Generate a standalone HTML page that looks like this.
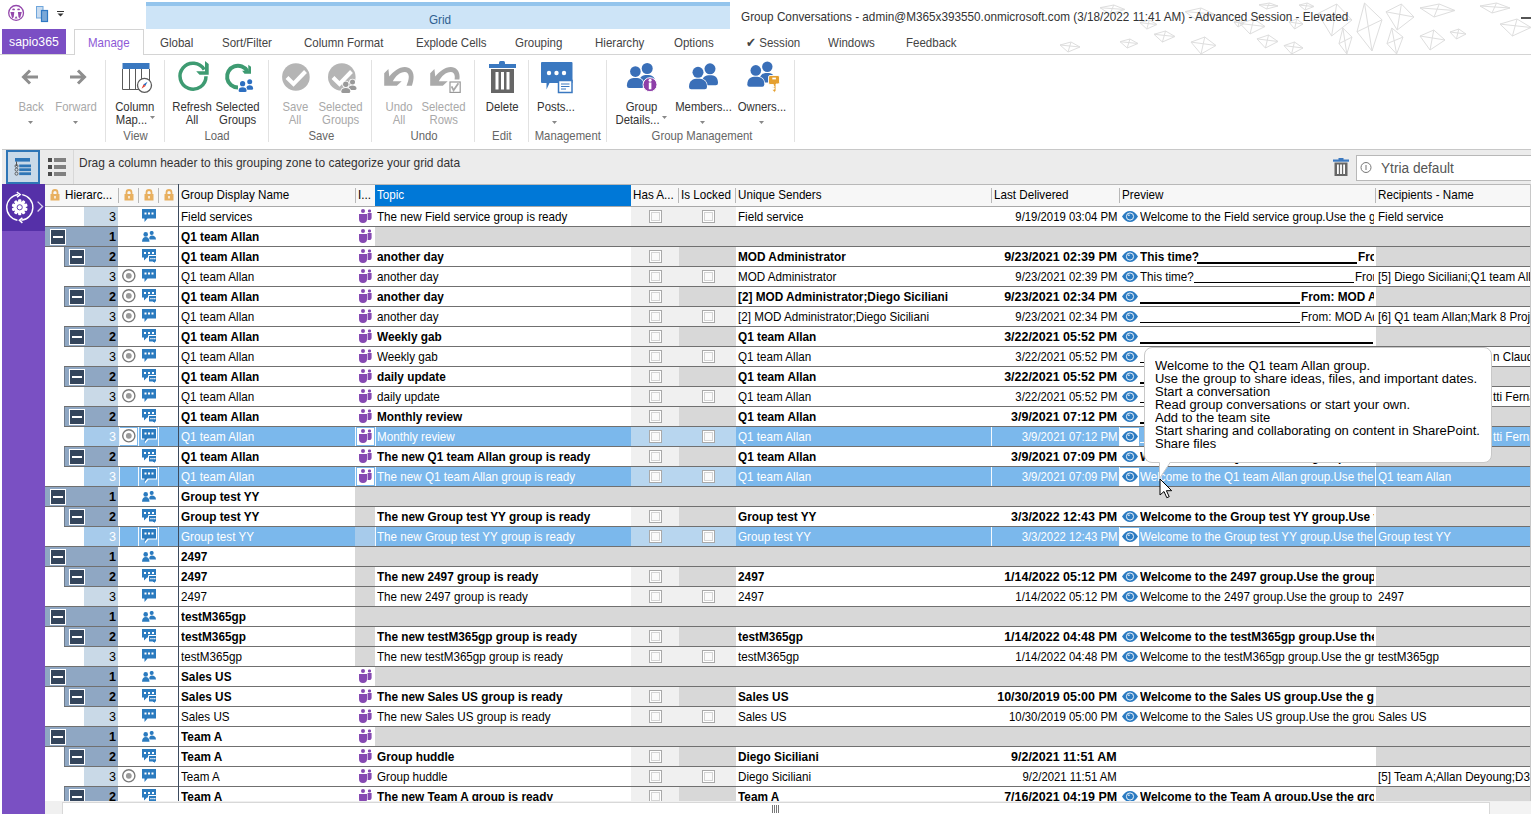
<!DOCTYPE html>
<html><head><meta charset="utf-8"><style>
*{margin:0;padding:0;box-sizing:border-box}
html,body{width:1531px;height:814px;overflow:hidden;background:#fff;font-family:"Liberation Sans",sans-serif;color:#000}
.a{position:absolute}
.tx{position:absolute;white-space:nowrap}
.tx span{white-space:nowrap}
.mbox{position:absolute;width:16px;height:16px;background:#34455c;border:1px solid #fff}
.mbox i{position:absolute;left:2px;top:6px;width:10px;height:2px;background:#fff}
.cb{position:absolute;width:13px;height:13px;border:1px solid #a9a9a9;background:#fafafa;box-shadow:inset 0 0 0 1px #fff,inset 0 0 0 2px #d4d4d4}
.sep{position:absolute;top:60px;width:1px;height:82px;background:#e2e2e2}
.hs{position:absolute;top:188px;width:1px;height:15px;background:#b8b8b8}
</style></head><body>
<!-- title bar -->
<svg class="a" style="left:0;top:0" width="1531" height="54" viewBox="0 0 1531 54"><g fill="none" stroke="#dedede" stroke-width="1"><path d="M1185.0 11.6L1201.0 8.0L1214.0 14.0L1196.6 20.0zM1185 11.6L1214 14.0M1200.95 8L1196.6 20"/><path d="M1140.0 22.7L1149.3 20.0L1157.0 24.5L1146.8 29.0zM1140 22.7L1157 24.5M1149.35 20L1146.8 29"/><path d="M1154.0 34.3L1165.5 31.0L1175.0 36.5L1162.4 42.0zM1154 34.3L1175 36.5M1165.55 31L1162.4 42"/><path d="M1120.0 41.7L1129.9 39.0L1138.0 43.5L1127.2 48.0zM1120 41.7L1138 43.5M1129.9 39L1127.2 48"/><path d="M1191.0 42.1L1204.8 37.0L1216.0 45.5L1201.0 54.0zM1191 42.1L1216 45.5M1204.75 37L1201.0 54"/><path d="M1234.0 22.1L1239.5 20.0L1244.0 23.5L1238.0 27.0zM1234 22.1L1244 23.5M1239.5 20L1238.0 27"/><path d="M1259.0 4.8L1269.5 3.0L1278.0 6.0L1266.6 9.0zM1259 4.8L1278 6.0M1269.45 3L1266.6 9"/><path d="M1299.0 5.1L1307.2 3.0L1314.0 6.5L1305.0 10.0zM1299 5.1L1314 6.5M1307.25 3L1305.0 10"/><path d="M1240.0 23.5L1253.8 19.0L1265.0 26.5L1250.0 34.0zM1240 23.5L1265 26.5M1253.75 19L1250.0 34"/><path d="M1289.0 22.0L1296.7 19.0L1303.0 24.0L1294.6 29.0zM1289 22.0L1303 24.0M1296.7 19L1294.6 29"/><path d="M1318.0 13.6L1336.7 4.0L1352.0 20.0L1331.6 36.0zM1318 13.6L1352 20.0M1336.7 4L1331.6 36"/><path d="M1257.0 38.9L1268.5 35.0L1278.0 41.5L1265.4 48.0zM1257 38.9L1278 41.5M1268.55 35L1265.4 48"/><path d="M1284.0 45.6L1294.5 42.0L1303.0 48.0L1291.6 54.0zM1284 45.6L1303 48.0M1294.45 42L1291.6 54"/><path d="M1342.9 28.0L1352.0 37.1L1346.8 54.0L1339.0 43.6zM1342.9 28L1346.8 54M1339 43.6L1352 37.1"/><path d="M1364.5 3.0L1382.0 19.8L1372.0 51.0L1357.0 31.8zM1364.5 3L1372.0 51M1357 31.799999999999997L1382 19.799999999999997"/><path d="M1386.0 11.8L1401.4 4.0L1414.0 17.0L1397.2 30.0zM1386 11.8L1414 17.0M1401.4 4L1397.2 30"/><path d="M1391.8 28.0L1403.0 37.1L1396.6 54.0L1387.0 43.6zM1391.8 28L1396.6 54M1387 43.6L1403 37.1"/><path d="M1420.0 7.9L1439.2 4.0L1455.0 10.5L1434.0 17.0zM1420 7.9L1455 10.5M1439.25 4L1434.0 17"/><path d="M1420.0 36.0L1433.8 30.0L1445.0 40.0L1430.0 50.0zM1420 36.0L1445 40.0M1433.75 30L1430.0 50"/><path d="M1450.0 32.0L1458.8 29.0L1466.0 34.0L1456.4 39.0zM1450 32.0L1466 34.0M1458.8 29L1456.4 39"/><path d="M1480.0 6.0L1496.5 3.0L1510.0 8.0L1492.0 13.0zM1480 6.0L1510 8.0M1496.5 3L1492.0 13"/><path d="M1500.0 24.1L1517.0 19.0L1531.0 27.5L1512.4 36.0zM1500 24.1L1531 27.5M1517.05 19L1512.4 36"/><path d="M1100.0 7.7L1113.8 5.0L1125.0 9.5L1110.0 14.0zM1100 7.699999999999999L1125 9.5M1113.75 5L1110.0 14"/><path d="M1060.0 45.0L1071.0 42.0L1080.0 47.0L1068.0 52.0zM1060 45.0L1080 47.0M1071.0 42L1068.0 52"/></g></svg>
<div class="a" style="left:146px;top:2px;width:584px;height:27px;background:#cde4f7;border-top:4px solid #93c4ec"></div>
<div class="tx" style="left:429px;top:10px;width:1000px;height:20px;line-height:20px;font-size:12.6px;color:#2f5f90;"><span style="position:absolute;left:0;top:0;transform-origin:0 0;transform:scaleX(0.93)">Grid</span></div>
<div class="tx" style="left:741px;top:7px;width:1000px;height:20px;line-height:20px;font-size:12.6px;color:#333;"><span style="position:absolute;left:0;top:0;transform-origin:0 0;transform:scaleX(0.932)">Group Conversations - admin@M365x393550.onmicrosoft.com (3/18/2022 11:41 AM) - Advanced Session - Elevated</span></div>
<!-- tabs -->
<div class="a" style="left:0;top:54px;width:1531px;height:1px;background:#d4d4d4"></div>
<div class="a" style="left:2px;top:29px;width:64px;height:25px;background:#7b4fc4"></div>
<div class="tx" style="left:9px;top:29px;width:1000px;height:25px;line-height:25px;font-size:13.2px;color:#fff;"><span style="position:absolute;left:0;top:0;transform-origin:0 0;transform:scaleX(0.93)">sapio365</span></div>
<div class="a" style="left:74px;top:29px;width:70px;height:26px;background:#fff;border:1px solid #d4d4d4;border-bottom:none"></div>
<div class="tx" style="left:88px;top:30px;width:1000px;height:26px;line-height:26px;font-size:12.6px;color:#8e59d6;"><span style="position:absolute;left:0;top:0;transform-origin:0 0;transform:scaleX(0.915)">Manage</span></div>
<div class="tx" style="left:160px;top:30px;width:1000px;height:26px;line-height:26px;font-size:12.6px;color:#444;"><span style="position:absolute;left:0;top:0;transform-origin:0 0;transform:scaleX(0.915)">Global</span></div>
<div class="tx" style="left:222px;top:30px;width:1000px;height:26px;line-height:26px;font-size:12.6px;color:#444;"><span style="position:absolute;left:0;top:0;transform-origin:0 0;transform:scaleX(0.915)">Sort/Filter</span></div>
<div class="tx" style="left:304px;top:30px;width:1000px;height:26px;line-height:26px;font-size:12.6px;color:#444;"><span style="position:absolute;left:0;top:0;transform-origin:0 0;transform:scaleX(0.915)">Column Format</span></div>
<div class="tx" style="left:416px;top:30px;width:1000px;height:26px;line-height:26px;font-size:12.6px;color:#444;"><span style="position:absolute;left:0;top:0;transform-origin:0 0;transform:scaleX(0.915)">Explode Cells</span></div>
<div class="tx" style="left:515px;top:30px;width:1000px;height:26px;line-height:26px;font-size:12.6px;color:#444;"><span style="position:absolute;left:0;top:0;transform-origin:0 0;transform:scaleX(0.915)">Grouping</span></div>
<div class="tx" style="left:595px;top:30px;width:1000px;height:26px;line-height:26px;font-size:12.6px;color:#444;"><span style="position:absolute;left:0;top:0;transform-origin:0 0;transform:scaleX(0.915)">Hierarchy</span></div>
<div class="tx" style="left:674px;top:30px;width:1000px;height:26px;line-height:26px;font-size:12.6px;color:#444;"><span style="position:absolute;left:0;top:0;transform-origin:0 0;transform:scaleX(0.915)">Options</span></div>
<div class="tx" style="left:746px;top:30px;width:1000px;height:26px;line-height:26px;font-size:12.6px;color:#444;"><span style="position:absolute;left:0;top:0;transform-origin:0 0;transform:scaleX(0.915)">&#10004; Session</span></div>
<div class="tx" style="left:828px;top:30px;width:1000px;height:26px;line-height:26px;font-size:12.6px;color:#444;"><span style="position:absolute;left:0;top:0;transform-origin:0 0;transform:scaleX(0.915)">Windows</span></div>
<div class="tx" style="left:906px;top:30px;width:1000px;height:26px;line-height:26px;font-size:12.6px;color:#444;"><span style="position:absolute;left:0;top:0;transform-origin:0 0;transform:scaleX(0.915)">Feedback</span></div>
<!-- ribbon -->
<div class="sep" style="left:105px"></div>
<div class="sep" style="left:164px"></div>
<div class="sep" style="left:268px"></div>
<div class="sep" style="left:371px"></div>
<div class="sep" style="left:474px"></div>
<div class="sep" style="left:528px"></div>
<div class="sep" style="left:606px"></div>
<div class="sep" style="left:794px"></div>
<div class="tx" style="left:-29px;top:101px;width:120px;height:13px;line-height:13px;font-size:12.6px;color:#a9a9a9;text-align:center"><span style="display:inline-block;transform:scaleX(0.9)">Back</span></div><div class="tx" style="left:16px;top:101px;width:120px;height:13px;line-height:13px;font-size:12.6px;color:#a9a9a9;text-align:center"><span style="display:inline-block;transform:scaleX(0.9)">Forward</span></div><div class="tx" style="left:75px;top:101px;width:120px;height:13px;line-height:13px;font-size:12.6px;color:#333;text-align:center"><span style="display:inline-block;transform:scaleX(0.9)">Column</span></div><div class="tx" style="left:71px;top:114px;width:120px;height:13px;line-height:13px;font-size:12.6px;color:#333;text-align:center"><span style="display:inline-block;transform:scaleX(0.9)">Map...</span></div><div class="tx" style="left:132px;top:101px;width:120px;height:13px;line-height:13px;font-size:12.6px;color:#333;text-align:center"><span style="display:inline-block;transform:scaleX(0.9)">Refresh</span></div><div class="tx" style="left:132px;top:114px;width:120px;height:13px;line-height:13px;font-size:12.6px;color:#333;text-align:center"><span style="display:inline-block;transform:scaleX(0.9)">All</span></div><div class="tx" style="left:178px;top:101px;width:120px;height:13px;line-height:13px;font-size:12.6px;color:#333;text-align:center"><span style="display:inline-block;transform:scaleX(0.9)">Selected</span></div><div class="tx" style="left:178px;top:114px;width:120px;height:13px;line-height:13px;font-size:12.6px;color:#333;text-align:center"><span style="display:inline-block;transform:scaleX(0.9)">Groups</span></div><div class="tx" style="left:235px;top:101px;width:120px;height:13px;line-height:13px;font-size:12.6px;color:#a9a9a9;text-align:center"><span style="display:inline-block;transform:scaleX(0.9)">Save</span></div><div class="tx" style="left:235px;top:114px;width:120px;height:13px;line-height:13px;font-size:12.6px;color:#a9a9a9;text-align:center"><span style="display:inline-block;transform:scaleX(0.9)">All</span></div><div class="tx" style="left:281px;top:101px;width:120px;height:13px;line-height:13px;font-size:12.6px;color:#a9a9a9;text-align:center"><span style="display:inline-block;transform:scaleX(0.9)">Selected</span></div><div class="tx" style="left:281px;top:114px;width:120px;height:13px;line-height:13px;font-size:12.6px;color:#a9a9a9;text-align:center"><span style="display:inline-block;transform:scaleX(0.9)">Groups</span></div><div class="tx" style="left:339px;top:101px;width:120px;height:13px;line-height:13px;font-size:12.6px;color:#a9a9a9;text-align:center"><span style="display:inline-block;transform:scaleX(0.9)">Undo</span></div><div class="tx" style="left:339px;top:114px;width:120px;height:13px;line-height:13px;font-size:12.6px;color:#a9a9a9;text-align:center"><span style="display:inline-block;transform:scaleX(0.9)">All</span></div><div class="tx" style="left:384px;top:101px;width:120px;height:13px;line-height:13px;font-size:12.6px;color:#a9a9a9;text-align:center"><span style="display:inline-block;transform:scaleX(0.9)">Selected</span></div><div class="tx" style="left:384px;top:114px;width:120px;height:13px;line-height:13px;font-size:12.6px;color:#a9a9a9;text-align:center"><span style="display:inline-block;transform:scaleX(0.9)">Rows</span></div><div class="tx" style="left:442px;top:101px;width:120px;height:13px;line-height:13px;font-size:12.6px;color:#333;text-align:center"><span style="display:inline-block;transform:scaleX(0.9)">Delete</span></div><div class="tx" style="left:496px;top:101px;width:120px;height:13px;line-height:13px;font-size:12.6px;color:#333;text-align:center"><span style="display:inline-block;transform:scaleX(0.9)">Posts...</span></div><div class="tx" style="left:582px;top:101px;width:120px;height:13px;line-height:13px;font-size:12.6px;color:#333;text-align:center"><span style="display:inline-block;transform:scaleX(0.9)">Group</span></div><div class="tx" style="left:577px;top:114px;width:120px;height:13px;line-height:13px;font-size:12.6px;color:#333;text-align:center"><span style="display:inline-block;transform:scaleX(0.9)">Details...</span></div><div class="tx" style="left:643px;top:101px;width:120px;height:13px;line-height:13px;font-size:12.6px;color:#333;text-align:center"><span style="display:inline-block;transform:scaleX(0.9)">Members...</span></div><div class="tx" style="left:702px;top:101px;width:120px;height:13px;line-height:13px;font-size:12.6px;color:#333;text-align:center"><span style="display:inline-block;transform:scaleX(0.9)">Owners...</span></div>
<div class="tx" style="left:56px;top:129px;width:160px;height:14px;line-height:14px;font-size:12.6px;color:#666;text-align:center"><span style="display:inline-block;transform:scaleX(0.9)">View</span></div><div class="tx" style="left:137px;top:129px;width:160px;height:14px;line-height:14px;font-size:12.6px;color:#666;text-align:center"><span style="display:inline-block;transform:scaleX(0.9)">Load</span></div><div class="tx" style="left:241px;top:129px;width:160px;height:14px;line-height:14px;font-size:12.6px;color:#666;text-align:center"><span style="display:inline-block;transform:scaleX(0.9)">Save</span></div><div class="tx" style="left:344px;top:129px;width:160px;height:14px;line-height:14px;font-size:12.6px;color:#666;text-align:center"><span style="display:inline-block;transform:scaleX(0.9)">Undo</span></div><div class="tx" style="left:422px;top:129px;width:160px;height:14px;line-height:14px;font-size:12.6px;color:#666;text-align:center"><span style="display:inline-block;transform:scaleX(0.9)">Edit</span></div><div class="tx" style="left:488px;top:129px;width:160px;height:14px;line-height:14px;font-size:12.6px;color:#666;text-align:center"><span style="display:inline-block;transform:scaleX(0.9)">Management</span></div><div class="tx" style="left:622px;top:129px;width:160px;height:14px;line-height:14px;font-size:12.6px;color:#666;text-align:center"><span style="display:inline-block;transform:scaleX(0.9)">Group Management</span></div>
<!-- grouping zone -->
<div class="a" style="left:2px;top:149px;width:1529px;height:35px;background:#ececec;border-top:1px solid #c8c8c8"></div>
<div class="a" style="left:6px;top:150px;width:34px;height:34px;background:#c9d9e8;border:2px solid #2e75b6"></div>
<div class="a" style="left:40px;top:150px;width:34px;height:34px;background:#ebebeb;border-right:1px solid #d8d8d8"></div>
<div class="tx" style="left:79px;top:153px;width:1000px;height:20px;line-height:20px;font-size:12.6px;color:#333;"><span style="position:absolute;left:0;top:0;transform-origin:0 0;transform:scaleX(0.95)">Drag a column header to this grouping zone to categorize your grid data</span></div>
<div class="a" style="left:1356px;top:155px;width:176px;height:26px;background:#fff;border:1px solid #b8b8b8"></div>
<div class="tx" style="left:1381px;top:158px;width:1000px;height:22px;line-height:22px;font-size:13.8px;color:#555;"><span style="position:absolute;left:0;top:0;transform-origin:0 0;transform:scaleX(0.99)">Ytria default</span></div>
<!-- sidebar -->
<div class="a" style="left:2px;top:184px;width:43px;height:630px;background:#7a50c3"></div>
<div class="a" style="left:2px;top:184px;width:43px;height:47px;background:#5530a8"></div>
<!-- grid header -->
<div class="a" style="left:45px;top:184px;width:1486px;height:23px;background:#f7f7f7;border-top:1px solid #b8b8b8;border-bottom:1px solid #a8a8a8"></div>
<div class="a" style="left:375px;top:185px;width:256px;height:21px;background:#0078d7"></div>
<div class="hs" style="left:118px"></div><div class="hs" style="left:138px"></div><div class="hs" style="left:158px"></div>
<div class="hs" style="left:355px"></div><div class="hs" style="left:678px"></div><div class="hs" style="left:735px"></div>
<div class="hs" style="left:991px"></div><div class="hs" style="left:1119px"></div><div class="hs" style="left:1375px"></div>
<div class="tx" style="left:65px;top:185px;width:1000px;height:20px;line-height:20px;font-size:12.6px;"><span style="position:absolute;left:0;top:0;transform-origin:0 0;transform:scaleX(0.925)">Hierarc...</span></div>
<div class="tx" style="left:181px;top:185px;width:1000px;height:20px;line-height:20px;font-size:12.6px;"><span style="position:absolute;left:0;top:0;transform-origin:0 0;transform:scaleX(0.925)">Group Display Name</span></div>
<div class="tx" style="left:358px;top:185px;width:1000px;height:20px;line-height:20px;font-size:12.6px;"><span style="position:absolute;left:0;top:0;transform-origin:0 0;transform:scaleX(0.925)">I...</span></div>
<div class="tx" style="left:633px;top:185px;width:1000px;height:20px;line-height:20px;font-size:12.6px;"><span style="position:absolute;left:0;top:0;transform-origin:0 0;transform:scaleX(0.925)">Has A...</span></div>
<div class="tx" style="left:681px;top:185px;width:1000px;height:20px;line-height:20px;font-size:12.6px;"><span style="position:absolute;left:0;top:0;transform-origin:0 0;transform:scaleX(0.925)">Is Locked</span></div>
<div class="tx" style="left:738px;top:185px;width:1000px;height:20px;line-height:20px;font-size:12.6px;"><span style="position:absolute;left:0;top:0;transform-origin:0 0;transform:scaleX(0.925)">Unique Senders</span></div>
<div class="tx" style="left:994px;top:185px;width:1000px;height:20px;line-height:20px;font-size:12.6px;"><span style="position:absolute;left:0;top:0;transform-origin:0 0;transform:scaleX(0.925)">Last Delivered</span></div>
<div class="tx" style="left:1122px;top:185px;width:1000px;height:20px;line-height:20px;font-size:12.6px;"><span style="position:absolute;left:0;top:0;transform-origin:0 0;transform:scaleX(0.925)">Preview</span></div>
<div class="tx" style="left:1378px;top:185px;width:1000px;height:20px;line-height:20px;font-size:12.6px;"><span style="position:absolute;left:0;top:0;transform-origin:0 0;transform:scaleX(0.925)">Recipients - Name</span></div><div class="tx" style="left:377px;top:185px;width:1000px;height:20px;line-height:20px;font-size:12.6px;color:#fff;"><span style="position:absolute;left:0;top:0;transform-origin:0 0;transform:scaleX(0.925)">Topic</span></div>
<!-- grid body -->
<div class="a" style="left:45px;top:207px;width:1485px;height:594px;background:#fff"></div>
<div class="a" style="left:84px;top:207px;width:34px;height:19px;background:#c9d9e7;"></div>
<div class="tx" style="left:-284px;top:207px;width:400px;height:20px;line-height:20px;font-size:12.6px;color:#000;"><span style="position:absolute;right:0;top:0;transform-origin:100% 0;transform:scaleX(1)">3</span></div>
<svg width="14" height="14" viewBox="0 0 14 14" style="position:absolute;left:142px;top:209px"><path d="M0 0h14v9.5h-8.5l-3 3.5v-3.5h-2.5z" fill="#2b7bbf"/><rect x="2.5" y="3.5" width="2" height="2" fill="#fff"/><rect x="6" y="3.5" width="2" height="2" fill="#fff"/><rect x="9.5" y="3.5" width="2" height="2" fill="#fff"/></svg>
<div class="tx" style="left:181px;top:207px;width:174px;height:20px;line-height:20px;font-size:12.6px;overflow:hidden;"><span style="position:absolute;left:0;top:0;transform-origin:0 0;transform:scaleX(0.925)">Field services</span></div>
<svg width="13" height="14" viewBox="0 0 13 14" style="position:absolute;left:359px;top:209px"><circle cx="4" cy="2" r="2" fill="#8649b2"/><rect x="9" y="0.4" width="3" height="3" rx="1.2" fill="#8649b2"/><path d="M8.6 4.1h4v4.3a2.6 2.6 0 0 1-2.6 2.6h-1.4z" fill="#8649b2"/><path d="M0 5h8v5a4 4 0 0 1-8 0z" fill="#8649b2"/></svg>
<div class="tx" style="left:377px;top:207px;width:1000px;height:20px;line-height:20px;font-size:12.6px;"><span style="position:absolute;left:0;top:0;transform-origin:0 0;transform:scaleX(0.925)">The new Field service group is ready</span></div>
<div class="a" style="left:631px;top:207px;width:48px;height:19px;background:#f0f0f0;"></div>
<div class="cb" style="left:649px;top:210px"></div>
<div class="a" style="left:679px;top:207px;width:57px;height:19px;background:#f0f0f0;"></div>
<div class="cb" style="left:702px;top:210px"></div>
<div class="tx" style="left:738px;top:207px;width:253px;height:20px;line-height:20px;font-size:12.6px;overflow:hidden;"><span style="position:absolute;left:0;top:0;transform-origin:0 0;transform:scaleX(0.925)">Field service</span></div>
<div class="tx" style="left:717px;top:207px;width:400px;height:20px;line-height:20px;font-size:12.6px;"><span style="position:absolute;right:0;top:0;transform-origin:100% 0;transform:scaleX(0.9)">9/19/2019 03:04 PM</span></div>
<svg width="16" height="11" viewBox="0 0 16 11" style="position:absolute;left:1122px;top:211px"><path d="M0 5.5C2.5 1.5 5 0 8 0S13.5 1.5 16 5.5C13.5 9.5 11 11 8 11S2.5 9.5 0 5.5z" fill="#2b7bc2"/><circle cx="8" cy="5.5" r="3.6" fill="none" stroke="#fff" stroke-width="0.9"/><circle cx="6.9" cy="4.3" r="0.8" fill="#fff"/></svg>
<div class="tx" style="left:1140px;top:207px;width:234px;height:20px;line-height:20px;font-size:12.6px;overflow:hidden;"><span style="position:absolute;left:0;top:0;transform-origin:0 0;transform:scaleX(0.925)">Welcome to the Field service group.Use the group to share</span></div>
<div class="tx" style="left:1378px;top:207px;width:152px;height:20px;line-height:20px;font-size:12.6px;overflow:hidden;"><span style="position:absolute;left:0;top:0;transform-origin:0 0;transform:scaleX(0.925)">Field service</span></div>
<div class="a" style="left:45px;top:227px;width:73px;height:19px;background:#8fa7c3;"></div>
<div class="mbox" style="left:50px;top:229px"><i></i></div>
<div class="tx" style="left:-284px;top:227px;width:400px;height:20px;line-height:20px;font-size:12.6px;font-weight:bold;"><span style="position:absolute;right:0;top:0;transform-origin:100% 0;transform:scaleX(1)">1</span></div>
<svg width="14" height="12" viewBox="0 0 14 12" style="position:absolute;left:142px;top:231px"><circle cx="9.7" cy="1.9" r="2" fill="#2b7bbf"/><path d="M7 8.4C7 5.8 8.2 4.5 10 4.5S14 5.6 14 8.4z" fill="#2b7bbf"/><path d="M-0.6 11.4C-0.6 7.6 1.2 5.3 3.75 5.3S8.1 7.6 8.1 11.4z" fill="#fff"/><circle cx="3.7" cy="3.4" r="2.9" fill="#fff"/><circle cx="3.7" cy="3.4" r="2.3" fill="#2b7bbf"/><path d="M0 10.8C0 7.8 1.5 6.1 3.75 6.1S7.5 7.8 7.5 10.8z" fill="#2b7bbf"/></svg>
<div class="tx" style="left:181px;top:227px;width:174px;height:20px;line-height:20px;font-size:12.6px;font-weight:bold;overflow:hidden;"><span style="position:absolute;left:0;top:0;transform-origin:0 0;transform:scaleX(0.937)">Q1 team Allan</span></div>
<svg width="13" height="14" viewBox="0 0 13 14" style="position:absolute;left:359px;top:229px"><circle cx="4" cy="2" r="2" fill="#8649b2"/><rect x="9" y="0.4" width="3" height="3" rx="1.2" fill="#8649b2"/><path d="M8.6 4.1h4v4.3a2.6 2.6 0 0 1-2.6 2.6h-1.4z" fill="#8649b2"/><path d="M0 5h8v5a4 4 0 0 1-8 0z" fill="#8649b2"/></svg>
<div class="a" style="left:375px;top:227px;width:1155px;height:19px;background:#d8d8d8;"></div>
<div class="a" style="left:45px;top:226px;width:1485px;height:1px;background:#707070"></div>
<div class="a" style="left:64px;top:247px;width:54px;height:19px;background:#8fa7c3;"></div>
<div class="a" style="left:64px;top:247px;width:1px;height:19px;background:#6f7c8c;"></div>
<div class="mbox" style="left:69px;top:249px"><i></i></div>
<div class="tx" style="left:-284px;top:247px;width:400px;height:20px;line-height:20px;font-size:12.6px;font-weight:bold;"><span style="position:absolute;right:0;top:0;transform-origin:100% 0;transform:scaleX(1)">2</span></div>
<svg width="15" height="16" viewBox="0 0 15 16" style="position:absolute;left:142px;top:249px"><path d="M0 0h14v8.5h-9l-3 3v-3h-2z" fill="#2b7bbf"/><rect x="2" y="3" width="2" height="2" fill="#fff"/><rect x="6" y="3" width="2" height="2" fill="#fff"/><rect x="10" y="3" width="2" height="2" fill="#fff"/><path d="M6.5 6.5h8v6.5h-1.5v2l-2-2h-4.5z" fill="#2b7bbf" stroke="#fff" stroke-width="1"/><rect x="8.3" y="9" width="1.3" height="1.3" fill="#fff"/><rect x="10.3" y="9" width="1.3" height="1.3" fill="#fff"/><rect x="12.2" y="9" width="1.3" height="1.3" fill="#fff"/></svg>
<div class="tx" style="left:181px;top:247px;width:174px;height:20px;line-height:20px;font-size:12.6px;font-weight:bold;overflow:hidden;"><span style="position:absolute;left:0;top:0;transform-origin:0 0;transform:scaleX(0.937)">Q1 team Allan</span></div>
<svg width="13" height="14" viewBox="0 0 13 14" style="position:absolute;left:359px;top:249px"><circle cx="4" cy="2" r="2" fill="#8649b2"/><rect x="9" y="0.4" width="3" height="3" rx="1.2" fill="#8649b2"/><path d="M8.6 4.1h4v4.3a2.6 2.6 0 0 1-2.6 2.6h-1.4z" fill="#8649b2"/><path d="M0 5h8v5a4 4 0 0 1-8 0z" fill="#8649b2"/></svg>
<div class="tx" style="left:377px;top:247px;width:1000px;height:20px;line-height:20px;font-size:12.6px;font-weight:bold;"><span style="position:absolute;left:0;top:0;transform-origin:0 0;transform:scaleX(0.937)">another day</span></div>
<div class="a" style="left:631px;top:247px;width:48px;height:19px;background:#f0f0f0;"></div>
<div class="cb" style="left:649px;top:250px"></div>
<div class="a" style="left:679px;top:247px;width:57px;height:19px;background:#d8d8d8;"></div>
<div class="tx" style="left:738px;top:247px;width:253px;height:20px;line-height:20px;font-size:12.6px;font-weight:bold;overflow:hidden;"><span style="position:absolute;left:0;top:0;transform-origin:0 0;transform:scaleX(0.937)">MOD Administrator</span></div>
<div class="tx" style="left:717px;top:247px;width:400px;height:20px;line-height:20px;font-size:12.6px;font-weight:bold;"><span style="position:absolute;right:0;top:0;transform-origin:100% 0;transform:scaleX(0.99)">9/23/2021 02:39 PM</span></div>
<svg width="16" height="11" viewBox="0 0 16 11" style="position:absolute;left:1122px;top:251px"><path d="M0 5.5C2.5 1.5 5 0 8 0S13.5 1.5 16 5.5C13.5 9.5 11 11 8 11S2.5 9.5 0 5.5z" fill="#2b7bc2"/><circle cx="8" cy="5.5" r="3.6" fill="none" stroke="#fff" stroke-width="0.9"/><circle cx="6.9" cy="4.3" r="0.8" fill="#fff"/></svg>
<div class="tx" style="left:1140px;top:247px;width:234px;height:20px;line-height:20px;font-size:12.6px;font-weight:bold;overflow:hidden;"><span style="position:absolute;left:0;top:0;transform-origin:0 0;transform:scaleX(0.937)">This time?</span></div>
<div class="a" style="left:1197px;top:262px;width:160px;height:2px;background:#000;"></div>
<div class="tx" style="left:1358px;top:247px;width:16px;height:20px;line-height:20px;font-size:12.6px;font-weight:bold;overflow:hidden;"><span style="position:absolute;left:0;top:0;transform-origin:0 0;transform:scaleX(0.937)">From: MOD</span></div>
<div class="a" style="left:1376px;top:247px;width:154px;height:19px;background:#d8d8d8;"></div>
<div class="a" style="left:45px;top:246px;width:1485px;height:1px;background:#707070"></div>
<div class="a" style="left:84px;top:267px;width:34px;height:19px;background:#c9d9e7;"></div>
<div class="tx" style="left:-284px;top:267px;width:400px;height:20px;line-height:20px;font-size:12.6px;color:#000;"><span style="position:absolute;right:0;top:0;transform-origin:100% 0;transform:scaleX(1)">3</span></div>
<svg width="14" height="14" viewBox="0 0 14 14" style="position:absolute;left:122px;top:269px"><circle cx="6.8" cy="6.8" r="6.1" fill="#fff" stroke="#7a7a7a" stroke-width="1.4"/><circle cx="6.8" cy="6.8" r="2.9" fill="#9a9a9a"/></svg>
<svg width="14" height="14" viewBox="0 0 14 14" style="position:absolute;left:142px;top:269px"><path d="M0 0h14v9.5h-8.5l-3 3.5v-3.5h-2.5z" fill="#2b7bbf"/><rect x="2.5" y="3.5" width="2" height="2" fill="#fff"/><rect x="6" y="3.5" width="2" height="2" fill="#fff"/><rect x="9.5" y="3.5" width="2" height="2" fill="#fff"/></svg>
<div class="tx" style="left:181px;top:267px;width:174px;height:20px;line-height:20px;font-size:12.6px;overflow:hidden;"><span style="position:absolute;left:0;top:0;transform-origin:0 0;transform:scaleX(0.925)">Q1 team Allan</span></div>
<svg width="13" height="14" viewBox="0 0 13 14" style="position:absolute;left:359px;top:269px"><circle cx="4" cy="2" r="2" fill="#8649b2"/><rect x="9" y="0.4" width="3" height="3" rx="1.2" fill="#8649b2"/><path d="M8.6 4.1h4v4.3a2.6 2.6 0 0 1-2.6 2.6h-1.4z" fill="#8649b2"/><path d="M0 5h8v5a4 4 0 0 1-8 0z" fill="#8649b2"/></svg>
<div class="tx" style="left:377px;top:267px;width:1000px;height:20px;line-height:20px;font-size:12.6px;"><span style="position:absolute;left:0;top:0;transform-origin:0 0;transform:scaleX(0.925)">another day</span></div>
<div class="a" style="left:631px;top:267px;width:48px;height:19px;background:#f0f0f0;"></div>
<div class="cb" style="left:649px;top:270px"></div>
<div class="a" style="left:679px;top:267px;width:57px;height:19px;background:#f0f0f0;"></div>
<div class="cb" style="left:702px;top:270px"></div>
<div class="tx" style="left:738px;top:267px;width:253px;height:20px;line-height:20px;font-size:12.6px;overflow:hidden;"><span style="position:absolute;left:0;top:0;transform-origin:0 0;transform:scaleX(0.925)">MOD Administrator</span></div>
<div class="tx" style="left:717px;top:267px;width:400px;height:20px;line-height:20px;font-size:12.6px;"><span style="position:absolute;right:0;top:0;transform-origin:100% 0;transform:scaleX(0.9)">9/23/2021 02:39 PM</span></div>
<svg width="16" height="11" viewBox="0 0 16 11" style="position:absolute;left:1122px;top:271px"><path d="M0 5.5C2.5 1.5 5 0 8 0S13.5 1.5 16 5.5C13.5 9.5 11 11 8 11S2.5 9.5 0 5.5z" fill="#2b7bc2"/><circle cx="8" cy="5.5" r="3.6" fill="none" stroke="#fff" stroke-width="0.9"/><circle cx="6.9" cy="4.3" r="0.8" fill="#fff"/></svg>
<div class="tx" style="left:1140px;top:267px;width:234px;height:20px;line-height:20px;font-size:12.6px;overflow:hidden;"><span style="position:absolute;left:0;top:0;transform-origin:0 0;transform:scaleX(0.925)">This time?</span></div>
<div class="a" style="left:1194px;top:282px;width:160px;height:1px;background:#000;"></div>
<div class="tx" style="left:1355px;top:267px;width:19px;height:20px;line-height:20px;font-size:12.6px;overflow:hidden;"><span style="position:absolute;left:0;top:0;transform-origin:0 0;transform:scaleX(0.925)">From: MOD</span></div>
<div class="tx" style="left:1378px;top:267px;width:152px;height:20px;line-height:20px;font-size:12.6px;overflow:hidden;"><span style="position:absolute;left:0;top:0;transform-origin:0 0;transform:scaleX(0.925)">[5] Diego Siciliani;Q1 team Allan</span></div>
<div class="a" style="left:64px;top:266px;width:1466px;height:1px;background:#707070"></div>
<div class="a" style="left:64px;top:287px;width:54px;height:19px;background:#8fa7c3;"></div>
<div class="a" style="left:64px;top:287px;width:1px;height:19px;background:#6f7c8c;"></div>
<div class="mbox" style="left:69px;top:289px"><i></i></div>
<div class="tx" style="left:-284px;top:287px;width:400px;height:20px;line-height:20px;font-size:12.6px;font-weight:bold;"><span style="position:absolute;right:0;top:0;transform-origin:100% 0;transform:scaleX(1)">2</span></div>
<svg width="14" height="14" viewBox="0 0 14 14" style="position:absolute;left:122px;top:289px"><circle cx="6.8" cy="6.8" r="6.1" fill="#fff" stroke="#7a7a7a" stroke-width="1.4"/><circle cx="6.8" cy="6.8" r="2.9" fill="#9a9a9a"/></svg>
<svg width="15" height="16" viewBox="0 0 15 16" style="position:absolute;left:142px;top:289px"><path d="M0 0h14v8.5h-9l-3 3v-3h-2z" fill="#2b7bbf"/><rect x="2" y="3" width="2" height="2" fill="#fff"/><rect x="6" y="3" width="2" height="2" fill="#fff"/><rect x="10" y="3" width="2" height="2" fill="#fff"/><path d="M6.5 6.5h8v6.5h-1.5v2l-2-2h-4.5z" fill="#2b7bbf" stroke="#fff" stroke-width="1"/><rect x="8.3" y="9" width="1.3" height="1.3" fill="#fff"/><rect x="10.3" y="9" width="1.3" height="1.3" fill="#fff"/><rect x="12.2" y="9" width="1.3" height="1.3" fill="#fff"/></svg>
<div class="tx" style="left:181px;top:287px;width:174px;height:20px;line-height:20px;font-size:12.6px;font-weight:bold;overflow:hidden;"><span style="position:absolute;left:0;top:0;transform-origin:0 0;transform:scaleX(0.937)">Q1 team Allan</span></div>
<svg width="13" height="14" viewBox="0 0 13 14" style="position:absolute;left:359px;top:289px"><circle cx="4" cy="2" r="2" fill="#8649b2"/><rect x="9" y="0.4" width="3" height="3" rx="1.2" fill="#8649b2"/><path d="M8.6 4.1h4v4.3a2.6 2.6 0 0 1-2.6 2.6h-1.4z" fill="#8649b2"/><path d="M0 5h8v5a4 4 0 0 1-8 0z" fill="#8649b2"/></svg>
<div class="tx" style="left:377px;top:287px;width:1000px;height:20px;line-height:20px;font-size:12.6px;font-weight:bold;"><span style="position:absolute;left:0;top:0;transform-origin:0 0;transform:scaleX(0.937)">another day</span></div>
<div class="a" style="left:631px;top:287px;width:48px;height:19px;background:#f0f0f0;"></div>
<div class="cb" style="left:649px;top:290px"></div>
<div class="a" style="left:679px;top:287px;width:57px;height:19px;background:#d8d8d8;"></div>
<div class="tx" style="left:738px;top:287px;width:253px;height:20px;line-height:20px;font-size:12.6px;font-weight:bold;overflow:hidden;"><span style="position:absolute;left:0;top:0;transform-origin:0 0;transform:scaleX(0.937)">[2] MOD Administrator;Diego Siciliani</span></div>
<div class="tx" style="left:717px;top:287px;width:400px;height:20px;line-height:20px;font-size:12.6px;font-weight:bold;"><span style="position:absolute;right:0;top:0;transform-origin:100% 0;transform:scaleX(0.99)">9/23/2021 02:34 PM</span></div>
<svg width="16" height="11" viewBox="0 0 16 11" style="position:absolute;left:1122px;top:291px"><path d="M0 5.5C2.5 1.5 5 0 8 0S13.5 1.5 16 5.5C13.5 9.5 11 11 8 11S2.5 9.5 0 5.5z" fill="#2b7bc2"/><circle cx="8" cy="5.5" r="3.6" fill="none" stroke="#fff" stroke-width="0.9"/><circle cx="6.9" cy="4.3" r="0.8" fill="#fff"/></svg>
<div class="a" style="left:1140px;top:302px;width:160px;height:2px;background:#000;"></div>
<div class="tx" style="left:1301px;top:287px;width:73px;height:20px;line-height:20px;font-size:12.6px;font-weight:bold;overflow:hidden;"><span style="position:absolute;left:0;top:0;transform-origin:0 0;transform:scaleX(0.937)">From: MOD Administrator</span></div>
<div class="a" style="left:1376px;top:287px;width:154px;height:19px;background:#d8d8d8;"></div>
<div class="a" style="left:64px;top:286px;width:1466px;height:1px;background:#707070"></div>
<div class="a" style="left:84px;top:307px;width:34px;height:19px;background:#c9d9e7;"></div>
<div class="tx" style="left:-284px;top:307px;width:400px;height:20px;line-height:20px;font-size:12.6px;color:#000;"><span style="position:absolute;right:0;top:0;transform-origin:100% 0;transform:scaleX(1)">3</span></div>
<svg width="14" height="14" viewBox="0 0 14 14" style="position:absolute;left:122px;top:309px"><circle cx="6.8" cy="6.8" r="6.1" fill="#fff" stroke="#7a7a7a" stroke-width="1.4"/><circle cx="6.8" cy="6.8" r="2.9" fill="#9a9a9a"/></svg>
<svg width="14" height="14" viewBox="0 0 14 14" style="position:absolute;left:142px;top:309px"><path d="M0 0h14v9.5h-8.5l-3 3.5v-3.5h-2.5z" fill="#2b7bbf"/><rect x="2.5" y="3.5" width="2" height="2" fill="#fff"/><rect x="6" y="3.5" width="2" height="2" fill="#fff"/><rect x="9.5" y="3.5" width="2" height="2" fill="#fff"/></svg>
<div class="tx" style="left:181px;top:307px;width:174px;height:20px;line-height:20px;font-size:12.6px;overflow:hidden;"><span style="position:absolute;left:0;top:0;transform-origin:0 0;transform:scaleX(0.925)">Q1 team Allan</span></div>
<svg width="13" height="14" viewBox="0 0 13 14" style="position:absolute;left:359px;top:309px"><circle cx="4" cy="2" r="2" fill="#8649b2"/><rect x="9" y="0.4" width="3" height="3" rx="1.2" fill="#8649b2"/><path d="M8.6 4.1h4v4.3a2.6 2.6 0 0 1-2.6 2.6h-1.4z" fill="#8649b2"/><path d="M0 5h8v5a4 4 0 0 1-8 0z" fill="#8649b2"/></svg>
<div class="tx" style="left:377px;top:307px;width:1000px;height:20px;line-height:20px;font-size:12.6px;"><span style="position:absolute;left:0;top:0;transform-origin:0 0;transform:scaleX(0.925)">another day</span></div>
<div class="a" style="left:631px;top:307px;width:48px;height:19px;background:#f0f0f0;"></div>
<div class="cb" style="left:649px;top:310px"></div>
<div class="a" style="left:679px;top:307px;width:57px;height:19px;background:#f0f0f0;"></div>
<div class="cb" style="left:702px;top:310px"></div>
<div class="tx" style="left:738px;top:307px;width:253px;height:20px;line-height:20px;font-size:12.6px;overflow:hidden;"><span style="position:absolute;left:0;top:0;transform-origin:0 0;transform:scaleX(0.925)">[2] MOD Administrator;Diego Siciliani</span></div>
<div class="tx" style="left:717px;top:307px;width:400px;height:20px;line-height:20px;font-size:12.6px;"><span style="position:absolute;right:0;top:0;transform-origin:100% 0;transform:scaleX(0.9)">9/23/2021 02:34 PM</span></div>
<svg width="16" height="11" viewBox="0 0 16 11" style="position:absolute;left:1122px;top:311px"><path d="M0 5.5C2.5 1.5 5 0 8 0S13.5 1.5 16 5.5C13.5 9.5 11 11 8 11S2.5 9.5 0 5.5z" fill="#2b7bc2"/><circle cx="8" cy="5.5" r="3.6" fill="none" stroke="#fff" stroke-width="0.9"/><circle cx="6.9" cy="4.3" r="0.8" fill="#fff"/></svg>
<div class="a" style="left:1140px;top:322px;width:160px;height:1px;background:#000;"></div>
<div class="tx" style="left:1301px;top:307px;width:73px;height:20px;line-height:20px;font-size:12.6px;overflow:hidden;"><span style="position:absolute;left:0;top:0;transform-origin:0 0;transform:scaleX(0.925)">From: MOD Administrator</span></div>
<div class="tx" style="left:1378px;top:307px;width:152px;height:20px;line-height:20px;font-size:12.6px;overflow:hidden;"><span style="position:absolute;left:0;top:0;transform-origin:0 0;transform:scaleX(0.925)">[6] Q1 team Allan;Mark 8 Project Team</span></div>
<div class="a" style="left:64px;top:306px;width:1466px;height:1px;background:#707070"></div>
<div class="a" style="left:64px;top:327px;width:54px;height:19px;background:#8fa7c3;"></div>
<div class="a" style="left:64px;top:327px;width:1px;height:19px;background:#6f7c8c;"></div>
<div class="mbox" style="left:69px;top:329px"><i></i></div>
<div class="tx" style="left:-284px;top:327px;width:400px;height:20px;line-height:20px;font-size:12.6px;font-weight:bold;"><span style="position:absolute;right:0;top:0;transform-origin:100% 0;transform:scaleX(1)">2</span></div>
<svg width="15" height="16" viewBox="0 0 15 16" style="position:absolute;left:142px;top:329px"><path d="M0 0h14v8.5h-9l-3 3v-3h-2z" fill="#2b7bbf"/><rect x="2" y="3" width="2" height="2" fill="#fff"/><rect x="6" y="3" width="2" height="2" fill="#fff"/><rect x="10" y="3" width="2" height="2" fill="#fff"/><path d="M6.5 6.5h8v6.5h-1.5v2l-2-2h-4.5z" fill="#2b7bbf" stroke="#fff" stroke-width="1"/><rect x="8.3" y="9" width="1.3" height="1.3" fill="#fff"/><rect x="10.3" y="9" width="1.3" height="1.3" fill="#fff"/><rect x="12.2" y="9" width="1.3" height="1.3" fill="#fff"/></svg>
<div class="tx" style="left:181px;top:327px;width:174px;height:20px;line-height:20px;font-size:12.6px;font-weight:bold;overflow:hidden;"><span style="position:absolute;left:0;top:0;transform-origin:0 0;transform:scaleX(0.937)">Q1 team Allan</span></div>
<svg width="13" height="14" viewBox="0 0 13 14" style="position:absolute;left:359px;top:329px"><circle cx="4" cy="2" r="2" fill="#8649b2"/><rect x="9" y="0.4" width="3" height="3" rx="1.2" fill="#8649b2"/><path d="M8.6 4.1h4v4.3a2.6 2.6 0 0 1-2.6 2.6h-1.4z" fill="#8649b2"/><path d="M0 5h8v5a4 4 0 0 1-8 0z" fill="#8649b2"/></svg>
<div class="tx" style="left:377px;top:327px;width:1000px;height:20px;line-height:20px;font-size:12.6px;font-weight:bold;"><span style="position:absolute;left:0;top:0;transform-origin:0 0;transform:scaleX(0.937)">Weekly gab</span></div>
<div class="a" style="left:631px;top:327px;width:48px;height:19px;background:#f0f0f0;"></div>
<div class="cb" style="left:649px;top:330px"></div>
<div class="a" style="left:679px;top:327px;width:57px;height:19px;background:#d8d8d8;"></div>
<div class="tx" style="left:738px;top:327px;width:253px;height:20px;line-height:20px;font-size:12.6px;font-weight:bold;overflow:hidden;"><span style="position:absolute;left:0;top:0;transform-origin:0 0;transform:scaleX(0.937)">Q1 team Allan</span></div>
<div class="tx" style="left:717px;top:327px;width:400px;height:20px;line-height:20px;font-size:12.6px;font-weight:bold;"><span style="position:absolute;right:0;top:0;transform-origin:100% 0;transform:scaleX(0.99)">3/22/2021 05:52 PM</span></div>
<svg width="16" height="11" viewBox="0 0 16 11" style="position:absolute;left:1122px;top:331px"><path d="M0 5.5C2.5 1.5 5 0 8 0S13.5 1.5 16 5.5C13.5 9.5 11 11 8 11S2.5 9.5 0 5.5z" fill="#2b7bc2"/><circle cx="8" cy="5.5" r="3.6" fill="none" stroke="#fff" stroke-width="0.9"/><circle cx="6.9" cy="4.3" r="0.8" fill="#fff"/></svg>
<div class="a" style="left:1140px;top:342px;width:233px;height:2px;background:#000;"></div>
<div class="a" style="left:1376px;top:327px;width:154px;height:19px;background:#d8d8d8;"></div>
<div class="a" style="left:64px;top:326px;width:1466px;height:1px;background:#707070"></div>
<div class="a" style="left:84px;top:347px;width:34px;height:19px;background:#c9d9e7;"></div>
<div class="tx" style="left:-284px;top:347px;width:400px;height:20px;line-height:20px;font-size:12.6px;color:#000;"><span style="position:absolute;right:0;top:0;transform-origin:100% 0;transform:scaleX(1)">3</span></div>
<svg width="14" height="14" viewBox="0 0 14 14" style="position:absolute;left:122px;top:349px"><circle cx="6.8" cy="6.8" r="6.1" fill="#fff" stroke="#7a7a7a" stroke-width="1.4"/><circle cx="6.8" cy="6.8" r="2.9" fill="#9a9a9a"/></svg>
<svg width="14" height="14" viewBox="0 0 14 14" style="position:absolute;left:142px;top:349px"><path d="M0 0h14v9.5h-8.5l-3 3.5v-3.5h-2.5z" fill="#2b7bbf"/><rect x="2.5" y="3.5" width="2" height="2" fill="#fff"/><rect x="6" y="3.5" width="2" height="2" fill="#fff"/><rect x="9.5" y="3.5" width="2" height="2" fill="#fff"/></svg>
<div class="tx" style="left:181px;top:347px;width:174px;height:20px;line-height:20px;font-size:12.6px;overflow:hidden;"><span style="position:absolute;left:0;top:0;transform-origin:0 0;transform:scaleX(0.925)">Q1 team Allan</span></div>
<svg width="13" height="14" viewBox="0 0 13 14" style="position:absolute;left:359px;top:349px"><circle cx="4" cy="2" r="2" fill="#8649b2"/><rect x="9" y="0.4" width="3" height="3" rx="1.2" fill="#8649b2"/><path d="M8.6 4.1h4v4.3a2.6 2.6 0 0 1-2.6 2.6h-1.4z" fill="#8649b2"/><path d="M0 5h8v5a4 4 0 0 1-8 0z" fill="#8649b2"/></svg>
<div class="tx" style="left:377px;top:347px;width:1000px;height:20px;line-height:20px;font-size:12.6px;"><span style="position:absolute;left:0;top:0;transform-origin:0 0;transform:scaleX(0.925)">Weekly gab</span></div>
<div class="a" style="left:631px;top:347px;width:48px;height:19px;background:#f0f0f0;"></div>
<div class="cb" style="left:649px;top:350px"></div>
<div class="a" style="left:679px;top:347px;width:57px;height:19px;background:#f0f0f0;"></div>
<div class="cb" style="left:702px;top:350px"></div>
<div class="tx" style="left:738px;top:347px;width:253px;height:20px;line-height:20px;font-size:12.6px;overflow:hidden;"><span style="position:absolute;left:0;top:0;transform-origin:0 0;transform:scaleX(0.925)">Q1 team Allan</span></div>
<div class="tx" style="left:717px;top:347px;width:400px;height:20px;line-height:20px;font-size:12.6px;"><span style="position:absolute;right:0;top:0;transform-origin:100% 0;transform:scaleX(0.9)">3/22/2021 05:52 PM</span></div>
<svg width="16" height="11" viewBox="0 0 16 11" style="position:absolute;left:1122px;top:351px"><path d="M0 5.5C2.5 1.5 5 0 8 0S13.5 1.5 16 5.5C13.5 9.5 11 11 8 11S2.5 9.5 0 5.5z" fill="#2b7bc2"/><circle cx="8" cy="5.5" r="3.6" fill="none" stroke="#fff" stroke-width="0.9"/><circle cx="6.9" cy="4.3" r="0.8" fill="#fff"/></svg>
<div class="a" style="left:1140px;top:362px;width:233px;height:1px;background:#000;"></div>
<div class="tx" style="left:1493px;top:347px;width:37px;height:20px;line-height:20px;font-size:12.6px;overflow:hidden;"><span style="position:absolute;left:0;top:0;transform-origin:0 0;transform:scaleX(0.925)">n Claudia</span></div>
<div class="a" style="left:64px;top:346px;width:1466px;height:1px;background:#707070"></div>
<div class="a" style="left:64px;top:367px;width:54px;height:19px;background:#8fa7c3;"></div>
<div class="a" style="left:64px;top:367px;width:1px;height:19px;background:#6f7c8c;"></div>
<div class="mbox" style="left:69px;top:369px"><i></i></div>
<div class="tx" style="left:-284px;top:367px;width:400px;height:20px;line-height:20px;font-size:12.6px;font-weight:bold;"><span style="position:absolute;right:0;top:0;transform-origin:100% 0;transform:scaleX(1)">2</span></div>
<svg width="15" height="16" viewBox="0 0 15 16" style="position:absolute;left:142px;top:369px"><path d="M0 0h14v8.5h-9l-3 3v-3h-2z" fill="#2b7bbf"/><rect x="2" y="3" width="2" height="2" fill="#fff"/><rect x="6" y="3" width="2" height="2" fill="#fff"/><rect x="10" y="3" width="2" height="2" fill="#fff"/><path d="M6.5 6.5h8v6.5h-1.5v2l-2-2h-4.5z" fill="#2b7bbf" stroke="#fff" stroke-width="1"/><rect x="8.3" y="9" width="1.3" height="1.3" fill="#fff"/><rect x="10.3" y="9" width="1.3" height="1.3" fill="#fff"/><rect x="12.2" y="9" width="1.3" height="1.3" fill="#fff"/></svg>
<div class="tx" style="left:181px;top:367px;width:174px;height:20px;line-height:20px;font-size:12.6px;font-weight:bold;overflow:hidden;"><span style="position:absolute;left:0;top:0;transform-origin:0 0;transform:scaleX(0.937)">Q1 team Allan</span></div>
<svg width="13" height="14" viewBox="0 0 13 14" style="position:absolute;left:359px;top:369px"><circle cx="4" cy="2" r="2" fill="#8649b2"/><rect x="9" y="0.4" width="3" height="3" rx="1.2" fill="#8649b2"/><path d="M8.6 4.1h4v4.3a2.6 2.6 0 0 1-2.6 2.6h-1.4z" fill="#8649b2"/><path d="M0 5h8v5a4 4 0 0 1-8 0z" fill="#8649b2"/></svg>
<div class="tx" style="left:377px;top:367px;width:1000px;height:20px;line-height:20px;font-size:12.6px;font-weight:bold;"><span style="position:absolute;left:0;top:0;transform-origin:0 0;transform:scaleX(0.937)">daily update</span></div>
<div class="a" style="left:631px;top:367px;width:48px;height:19px;background:#f0f0f0;"></div>
<div class="cb" style="left:649px;top:370px"></div>
<div class="a" style="left:679px;top:367px;width:57px;height:19px;background:#d8d8d8;"></div>
<div class="tx" style="left:738px;top:367px;width:253px;height:20px;line-height:20px;font-size:12.6px;font-weight:bold;overflow:hidden;"><span style="position:absolute;left:0;top:0;transform-origin:0 0;transform:scaleX(0.937)">Q1 team Allan</span></div>
<div class="tx" style="left:717px;top:367px;width:400px;height:20px;line-height:20px;font-size:12.6px;font-weight:bold;"><span style="position:absolute;right:0;top:0;transform-origin:100% 0;transform:scaleX(0.99)">3/22/2021 05:52 PM</span></div>
<svg width="16" height="11" viewBox="0 0 16 11" style="position:absolute;left:1122px;top:371px"><path d="M0 5.5C2.5 1.5 5 0 8 0S13.5 1.5 16 5.5C13.5 9.5 11 11 8 11S2.5 9.5 0 5.5z" fill="#2b7bc2"/><circle cx="8" cy="5.5" r="3.6" fill="none" stroke="#fff" stroke-width="0.9"/><circle cx="6.9" cy="4.3" r="0.8" fill="#fff"/></svg>
<div class="a" style="left:1140px;top:382px;width:233px;height:2px;background:#000;"></div>
<div class="a" style="left:1376px;top:367px;width:154px;height:19px;background:#d8d8d8;"></div>
<div class="a" style="left:64px;top:366px;width:1466px;height:1px;background:#707070"></div>
<div class="a" style="left:84px;top:387px;width:34px;height:19px;background:#c9d9e7;"></div>
<div class="tx" style="left:-284px;top:387px;width:400px;height:20px;line-height:20px;font-size:12.6px;color:#000;"><span style="position:absolute;right:0;top:0;transform-origin:100% 0;transform:scaleX(1)">3</span></div>
<svg width="14" height="14" viewBox="0 0 14 14" style="position:absolute;left:122px;top:389px"><circle cx="6.8" cy="6.8" r="6.1" fill="#fff" stroke="#7a7a7a" stroke-width="1.4"/><circle cx="6.8" cy="6.8" r="2.9" fill="#9a9a9a"/></svg>
<svg width="14" height="14" viewBox="0 0 14 14" style="position:absolute;left:142px;top:389px"><path d="M0 0h14v9.5h-8.5l-3 3.5v-3.5h-2.5z" fill="#2b7bbf"/><rect x="2.5" y="3.5" width="2" height="2" fill="#fff"/><rect x="6" y="3.5" width="2" height="2" fill="#fff"/><rect x="9.5" y="3.5" width="2" height="2" fill="#fff"/></svg>
<div class="tx" style="left:181px;top:387px;width:174px;height:20px;line-height:20px;font-size:12.6px;overflow:hidden;"><span style="position:absolute;left:0;top:0;transform-origin:0 0;transform:scaleX(0.925)">Q1 team Allan</span></div>
<svg width="13" height="14" viewBox="0 0 13 14" style="position:absolute;left:359px;top:389px"><circle cx="4" cy="2" r="2" fill="#8649b2"/><rect x="9" y="0.4" width="3" height="3" rx="1.2" fill="#8649b2"/><path d="M8.6 4.1h4v4.3a2.6 2.6 0 0 1-2.6 2.6h-1.4z" fill="#8649b2"/><path d="M0 5h8v5a4 4 0 0 1-8 0z" fill="#8649b2"/></svg>
<div class="tx" style="left:377px;top:387px;width:1000px;height:20px;line-height:20px;font-size:12.6px;"><span style="position:absolute;left:0;top:0;transform-origin:0 0;transform:scaleX(0.925)">daily update</span></div>
<div class="a" style="left:631px;top:387px;width:48px;height:19px;background:#f0f0f0;"></div>
<div class="cb" style="left:649px;top:390px"></div>
<div class="a" style="left:679px;top:387px;width:57px;height:19px;background:#f0f0f0;"></div>
<div class="cb" style="left:702px;top:390px"></div>
<div class="tx" style="left:738px;top:387px;width:253px;height:20px;line-height:20px;font-size:12.6px;overflow:hidden;"><span style="position:absolute;left:0;top:0;transform-origin:0 0;transform:scaleX(0.925)">Q1 team Allan</span></div>
<div class="tx" style="left:717px;top:387px;width:400px;height:20px;line-height:20px;font-size:12.6px;"><span style="position:absolute;right:0;top:0;transform-origin:100% 0;transform:scaleX(0.9)">3/22/2021 05:52 PM</span></div>
<svg width="16" height="11" viewBox="0 0 16 11" style="position:absolute;left:1122px;top:391px"><path d="M0 5.5C2.5 1.5 5 0 8 0S13.5 1.5 16 5.5C13.5 9.5 11 11 8 11S2.5 9.5 0 5.5z" fill="#2b7bc2"/><circle cx="8" cy="5.5" r="3.6" fill="none" stroke="#fff" stroke-width="0.9"/><circle cx="6.9" cy="4.3" r="0.8" fill="#fff"/></svg>
<div class="a" style="left:1140px;top:402px;width:233px;height:1px;background:#000;"></div>
<div class="tx" style="left:1493px;top:387px;width:37px;height:20px;line-height:20px;font-size:12.6px;overflow:hidden;"><span style="position:absolute;left:0;top:0;transform-origin:0 0;transform:scaleX(0.925)">tti Fernandez</span></div>
<div class="a" style="left:64px;top:386px;width:1466px;height:1px;background:#707070"></div>
<div class="a" style="left:64px;top:407px;width:54px;height:19px;background:#8fa7c3;"></div>
<div class="a" style="left:64px;top:407px;width:1px;height:19px;background:#6f7c8c;"></div>
<div class="mbox" style="left:69px;top:409px"><i></i></div>
<div class="tx" style="left:-284px;top:407px;width:400px;height:20px;line-height:20px;font-size:12.6px;font-weight:bold;"><span style="position:absolute;right:0;top:0;transform-origin:100% 0;transform:scaleX(1)">2</span></div>
<svg width="15" height="16" viewBox="0 0 15 16" style="position:absolute;left:142px;top:409px"><path d="M0 0h14v8.5h-9l-3 3v-3h-2z" fill="#2b7bbf"/><rect x="2" y="3" width="2" height="2" fill="#fff"/><rect x="6" y="3" width="2" height="2" fill="#fff"/><rect x="10" y="3" width="2" height="2" fill="#fff"/><path d="M6.5 6.5h8v6.5h-1.5v2l-2-2h-4.5z" fill="#2b7bbf" stroke="#fff" stroke-width="1"/><rect x="8.3" y="9" width="1.3" height="1.3" fill="#fff"/><rect x="10.3" y="9" width="1.3" height="1.3" fill="#fff"/><rect x="12.2" y="9" width="1.3" height="1.3" fill="#fff"/></svg>
<div class="tx" style="left:181px;top:407px;width:174px;height:20px;line-height:20px;font-size:12.6px;font-weight:bold;overflow:hidden;"><span style="position:absolute;left:0;top:0;transform-origin:0 0;transform:scaleX(0.937)">Q1 team Allan</span></div>
<svg width="13" height="14" viewBox="0 0 13 14" style="position:absolute;left:359px;top:409px"><circle cx="4" cy="2" r="2" fill="#8649b2"/><rect x="9" y="0.4" width="3" height="3" rx="1.2" fill="#8649b2"/><path d="M8.6 4.1h4v4.3a2.6 2.6 0 0 1-2.6 2.6h-1.4z" fill="#8649b2"/><path d="M0 5h8v5a4 4 0 0 1-8 0z" fill="#8649b2"/></svg>
<div class="tx" style="left:377px;top:407px;width:1000px;height:20px;line-height:20px;font-size:12.6px;font-weight:bold;"><span style="position:absolute;left:0;top:0;transform-origin:0 0;transform:scaleX(0.937)">Monthly review</span></div>
<div class="a" style="left:631px;top:407px;width:48px;height:19px;background:#f0f0f0;"></div>
<div class="cb" style="left:649px;top:410px"></div>
<div class="a" style="left:679px;top:407px;width:57px;height:19px;background:#d8d8d8;"></div>
<div class="tx" style="left:738px;top:407px;width:253px;height:20px;line-height:20px;font-size:12.6px;font-weight:bold;overflow:hidden;"><span style="position:absolute;left:0;top:0;transform-origin:0 0;transform:scaleX(0.937)">Q1 team Allan</span></div>
<div class="tx" style="left:717px;top:407px;width:400px;height:20px;line-height:20px;font-size:12.6px;font-weight:bold;"><span style="position:absolute;right:0;top:0;transform-origin:100% 0;transform:scaleX(0.99)">3/9/2021 07:12 PM</span></div>
<svg width="16" height="11" viewBox="0 0 16 11" style="position:absolute;left:1122px;top:411px"><path d="M0 5.5C2.5 1.5 5 0 8 0S13.5 1.5 16 5.5C13.5 9.5 11 11 8 11S2.5 9.5 0 5.5z" fill="#2b7bc2"/><circle cx="8" cy="5.5" r="3.6" fill="none" stroke="#fff" stroke-width="0.9"/><circle cx="6.9" cy="4.3" r="0.8" fill="#fff"/></svg>
<div class="a" style="left:1140px;top:422px;width:233px;height:2px;background:#000;"></div>
<div class="a" style="left:1376px;top:407px;width:154px;height:19px;background:#d8d8d8;"></div>
<div class="a" style="left:64px;top:406px;width:1466px;height:1px;background:#707070"></div>
<div class="a" style="left:119px;top:427px;width:1411px;height:19px;background:#7bb8ec;"></div>
<div class="a" style="left:84px;top:427px;width:35px;height:19px;background:#a7cbeb;"></div>
<div class="a" style="left:119px;top:427px;width:1px;height:19px;background:#f4f9fd;"></div>
<div class="a" style="left:138px;top:427px;width:1px;height:19px;background:#f4f9fd;"></div>
<div class="a" style="left:158px;top:427px;width:1px;height:19px;background:#f4f9fd;"></div>
<div class="a" style="left:355px;top:427px;width:1px;height:19px;background:#f4f9fd;"></div>
<div class="a" style="left:375px;top:427px;width:1px;height:19px;background:#f4f9fd;"></div>
<div class="a" style="left:631px;top:427px;width:1px;height:19px;background:#f4f9fd;"></div>
<div class="a" style="left:678px;top:427px;width:1px;height:19px;background:#f4f9fd;"></div>
<div class="a" style="left:735px;top:427px;width:1px;height:19px;background:#f4f9fd;"></div>
<div class="a" style="left:991px;top:427px;width:1px;height:19px;background:#f4f9fd;"></div>
<div class="a" style="left:1119px;top:427px;width:1px;height:19px;background:#f4f9fd;"></div>
<div class="a" style="left:1375px;top:427px;width:1px;height:19px;background:#f4f9fd;"></div>
<div class="tx" style="left:-284px;top:427px;width:400px;height:20px;line-height:20px;font-size:12.6px;color:#fff;"><span style="position:absolute;right:0;top:0;transform-origin:100% 0;transform:scaleX(1)">3</span></div>
<div class="a" style="left:120px;top:428px;width:17px;height:17px;background:#fff;"></div>
<svg width="14" height="14" viewBox="0 0 14 14" style="position:absolute;left:122px;top:429px"><circle cx="6.8" cy="6.8" r="6.1" fill="#fff" stroke="#7a7a7a" stroke-width="1.4"/><circle cx="6.8" cy="6.8" r="2.9" fill="#9a9a9a"/></svg>
<svg width="16" height="16" viewBox="0 0 16 16" style="position:absolute;left:141px;top:428px"><path d="M0 0h16v11.5h-8.5l-3.5 4v-4h-4z" fill="#fff"/></svg>
<svg width="14" height="14" viewBox="0 0 14 14" style="position:absolute;left:142px;top:429px"><path d="M0 0h14v9.5h-8.5l-3 3.5v-3.5h-2.5z" fill="#2b7bbf"/><rect x="2.5" y="3.5" width="2" height="2" fill="#fff"/><rect x="6" y="3.5" width="2" height="2" fill="#fff"/><rect x="9.5" y="3.5" width="2" height="2" fill="#fff"/></svg>
<div class="tx" style="left:181px;top:427px;width:174px;height:20px;line-height:20px;font-size:12.6px;color:#fff;overflow:hidden;"><span style="position:absolute;left:0;top:0;transform-origin:0 0;transform:scaleX(0.925)">Q1 team Allan</span></div>
<div class="a" style="left:357px;top:428px;width:17px;height:17px;background:#fff;"></div>
<svg width="13" height="14" viewBox="0 0 13 14" style="position:absolute;left:359px;top:429px"><circle cx="4" cy="2" r="2" fill="#8649b2"/><rect x="9" y="0.4" width="3" height="3" rx="1.2" fill="#8649b2"/><path d="M8.6 4.1h4v4.3a2.6 2.6 0 0 1-2.6 2.6h-1.4z" fill="#8649b2"/><path d="M0 5h8v5a4 4 0 0 1-8 0z" fill="#8649b2"/></svg>
<div class="tx" style="left:377px;top:427px;width:1000px;height:20px;line-height:20px;font-size:12.6px;color:#fff;"><span style="position:absolute;left:0;top:0;transform-origin:0 0;transform:scaleX(0.925)">Monthly review</span></div>
<div class="a" style="left:631px;top:427px;width:48px;height:19px;background:#b8d6ef;"></div>
<div class="cb" style="left:649px;top:430px"></div>
<div class="a" style="left:679px;top:427px;width:57px;height:19px;background:#b8d6ef;"></div>
<div class="cb" style="left:702px;top:430px"></div>
<div class="tx" style="left:738px;top:427px;width:253px;height:20px;line-height:20px;font-size:12.6px;color:#fff;overflow:hidden;"><span style="position:absolute;left:0;top:0;transform-origin:0 0;transform:scaleX(0.925)">Q1 team Allan</span></div>
<div class="tx" style="left:717px;top:427px;width:400px;height:20px;line-height:20px;font-size:12.6px;color:#fff;"><span style="position:absolute;right:0;top:0;transform-origin:100% 0;transform:scaleX(0.9)">3/9/2021 07:12 PM</span></div>
<div class="a" style="left:1120px;top:428px;width:19px;height:18px;background:#fff;"></div>
<svg width="16" height="11" viewBox="0 0 16 11" style="position:absolute;left:1122px;top:431px"><path d="M0 5.5C2.5 1.5 5 0 8 0S13.5 1.5 16 5.5C13.5 9.5 11 11 8 11S2.5 9.5 0 5.5z" fill="#2b7bc2"/><circle cx="8" cy="5.5" r="3.6" fill="none" stroke="#fff" stroke-width="0.9"/><circle cx="6.9" cy="4.3" r="0.8" fill="#fff"/></svg>
<div class="a" style="left:1140px;top:442px;width:233px;height:1px;background:#fff;"></div>
<div class="tx" style="left:1493px;top:427px;width:37px;height:20px;line-height:20px;font-size:12.6px;color:#fff;overflow:hidden;"><span style="position:absolute;left:0;top:0;transform-origin:0 0;transform:scaleX(0.925)">tti Fernandez</span></div>
<div class="a" style="left:64px;top:426px;width:1466px;height:1px;background:#707070"></div>
<div class="a" style="left:64px;top:447px;width:54px;height:19px;background:#8fa7c3;"></div>
<div class="a" style="left:64px;top:447px;width:1px;height:19px;background:#6f7c8c;"></div>
<div class="mbox" style="left:69px;top:449px"><i></i></div>
<div class="tx" style="left:-284px;top:447px;width:400px;height:20px;line-height:20px;font-size:12.6px;font-weight:bold;"><span style="position:absolute;right:0;top:0;transform-origin:100% 0;transform:scaleX(1)">2</span></div>
<svg width="15" height="16" viewBox="0 0 15 16" style="position:absolute;left:142px;top:449px"><path d="M0 0h14v8.5h-9l-3 3v-3h-2z" fill="#2b7bbf"/><rect x="2" y="3" width="2" height="2" fill="#fff"/><rect x="6" y="3" width="2" height="2" fill="#fff"/><rect x="10" y="3" width="2" height="2" fill="#fff"/><path d="M6.5 6.5h8v6.5h-1.5v2l-2-2h-4.5z" fill="#2b7bbf" stroke="#fff" stroke-width="1"/><rect x="8.3" y="9" width="1.3" height="1.3" fill="#fff"/><rect x="10.3" y="9" width="1.3" height="1.3" fill="#fff"/><rect x="12.2" y="9" width="1.3" height="1.3" fill="#fff"/></svg>
<div class="tx" style="left:181px;top:447px;width:174px;height:20px;line-height:20px;font-size:12.6px;font-weight:bold;overflow:hidden;"><span style="position:absolute;left:0;top:0;transform-origin:0 0;transform:scaleX(0.937)">Q1 team Allan</span></div>
<svg width="13" height="14" viewBox="0 0 13 14" style="position:absolute;left:359px;top:449px"><circle cx="4" cy="2" r="2" fill="#8649b2"/><rect x="9" y="0.4" width="3" height="3" rx="1.2" fill="#8649b2"/><path d="M8.6 4.1h4v4.3a2.6 2.6 0 0 1-2.6 2.6h-1.4z" fill="#8649b2"/><path d="M0 5h8v5a4 4 0 0 1-8 0z" fill="#8649b2"/></svg>
<div class="tx" style="left:377px;top:447px;width:1000px;height:20px;line-height:20px;font-size:12.6px;font-weight:bold;"><span style="position:absolute;left:0;top:0;transform-origin:0 0;transform:scaleX(0.937)">The new Q1 team Allan group is ready</span></div>
<div class="a" style="left:631px;top:447px;width:48px;height:19px;background:#f0f0f0;"></div>
<div class="cb" style="left:649px;top:450px"></div>
<div class="a" style="left:679px;top:447px;width:57px;height:19px;background:#d8d8d8;"></div>
<div class="tx" style="left:738px;top:447px;width:253px;height:20px;line-height:20px;font-size:12.6px;font-weight:bold;overflow:hidden;"><span style="position:absolute;left:0;top:0;transform-origin:0 0;transform:scaleX(0.937)">Q1 team Allan</span></div>
<div class="tx" style="left:717px;top:447px;width:400px;height:20px;line-height:20px;font-size:12.6px;font-weight:bold;"><span style="position:absolute;right:0;top:0;transform-origin:100% 0;transform:scaleX(0.99)">3/9/2021 07:09 PM</span></div>
<svg width="16" height="11" viewBox="0 0 16 11" style="position:absolute;left:1122px;top:451px"><path d="M0 5.5C2.5 1.5 5 0 8 0S13.5 1.5 16 5.5C13.5 9.5 11 11 8 11S2.5 9.5 0 5.5z" fill="#2b7bc2"/><circle cx="8" cy="5.5" r="3.6" fill="none" stroke="#fff" stroke-width="0.9"/><circle cx="6.9" cy="4.3" r="0.8" fill="#fff"/></svg>
<div class="tx" style="left:1140px;top:447px;width:234px;height:20px;line-height:20px;font-size:12.6px;font-weight:bold;overflow:hidden;"><span style="position:absolute;left:0;top:0;transform-origin:0 0;transform:scaleX(0.937)">Welcome to the Q1 team Allan group.Use the group</span></div>
<div class="a" style="left:1376px;top:447px;width:154px;height:19px;background:#d8d8d8;"></div>
<div class="a" style="left:64px;top:446px;width:1466px;height:1px;background:#707070"></div>
<div class="a" style="left:119px;top:467px;width:1411px;height:19px;background:#7bb8ec;"></div>
<div class="a" style="left:84px;top:467px;width:35px;height:19px;background:#a7cbeb;"></div>
<div class="a" style="left:119px;top:467px;width:1px;height:19px;background:#f4f9fd;"></div>
<div class="a" style="left:138px;top:467px;width:1px;height:19px;background:#f4f9fd;"></div>
<div class="a" style="left:158px;top:467px;width:1px;height:19px;background:#f4f9fd;"></div>
<div class="a" style="left:355px;top:467px;width:1px;height:19px;background:#f4f9fd;"></div>
<div class="a" style="left:375px;top:467px;width:1px;height:19px;background:#f4f9fd;"></div>
<div class="a" style="left:631px;top:467px;width:1px;height:19px;background:#f4f9fd;"></div>
<div class="a" style="left:678px;top:467px;width:1px;height:19px;background:#f4f9fd;"></div>
<div class="a" style="left:735px;top:467px;width:1px;height:19px;background:#f4f9fd;"></div>
<div class="a" style="left:991px;top:467px;width:1px;height:19px;background:#f4f9fd;"></div>
<div class="a" style="left:1119px;top:467px;width:1px;height:19px;background:#f4f9fd;"></div>
<div class="a" style="left:1375px;top:467px;width:1px;height:19px;background:#f4f9fd;"></div>
<div class="tx" style="left:-284px;top:467px;width:400px;height:20px;line-height:20px;font-size:12.6px;color:#fff;"><span style="position:absolute;right:0;top:0;transform-origin:100% 0;transform:scaleX(1)">3</span></div>
<svg width="16" height="16" viewBox="0 0 16 16" style="position:absolute;left:141px;top:468px"><path d="M0 0h16v11.5h-8.5l-3.5 4v-4h-4z" fill="#fff"/></svg>
<svg width="14" height="14" viewBox="0 0 14 14" style="position:absolute;left:142px;top:469px"><path d="M0 0h14v9.5h-8.5l-3 3.5v-3.5h-2.5z" fill="#2b7bbf"/><rect x="2.5" y="3.5" width="2" height="2" fill="#fff"/><rect x="6" y="3.5" width="2" height="2" fill="#fff"/><rect x="9.5" y="3.5" width="2" height="2" fill="#fff"/></svg>
<div class="tx" style="left:181px;top:467px;width:174px;height:20px;line-height:20px;font-size:12.6px;color:#fff;overflow:hidden;"><span style="position:absolute;left:0;top:0;transform-origin:0 0;transform:scaleX(0.925)">Q1 team Allan</span></div>
<div class="a" style="left:357px;top:468px;width:17px;height:17px;background:#fff;"></div>
<svg width="13" height="14" viewBox="0 0 13 14" style="position:absolute;left:359px;top:469px"><circle cx="4" cy="2" r="2" fill="#8649b2"/><rect x="9" y="0.4" width="3" height="3" rx="1.2" fill="#8649b2"/><path d="M8.6 4.1h4v4.3a2.6 2.6 0 0 1-2.6 2.6h-1.4z" fill="#8649b2"/><path d="M0 5h8v5a4 4 0 0 1-8 0z" fill="#8649b2"/></svg>
<div class="tx" style="left:377px;top:467px;width:1000px;height:20px;line-height:20px;font-size:12.6px;color:#fff;"><span style="position:absolute;left:0;top:0;transform-origin:0 0;transform:scaleX(0.925)">The new Q1 team Allan group is ready</span></div>
<div class="a" style="left:631px;top:467px;width:48px;height:19px;background:#b8d6ef;"></div>
<div class="cb" style="left:649px;top:470px"></div>
<div class="a" style="left:679px;top:467px;width:57px;height:19px;background:#b8d6ef;"></div>
<div class="cb" style="left:702px;top:470px"></div>
<div class="tx" style="left:738px;top:467px;width:253px;height:20px;line-height:20px;font-size:12.6px;color:#fff;overflow:hidden;"><span style="position:absolute;left:0;top:0;transform-origin:0 0;transform:scaleX(0.925)">Q1 team Allan</span></div>
<div class="tx" style="left:717px;top:467px;width:400px;height:20px;line-height:20px;font-size:12.6px;color:#fff;"><span style="position:absolute;right:0;top:0;transform-origin:100% 0;transform:scaleX(0.9)">3/9/2021 07:09 PM</span></div>
<div class="a" style="left:1120px;top:468px;width:19px;height:18px;background:#fff;"></div>
<svg width="16" height="11" viewBox="0 0 16 11" style="position:absolute;left:1122px;top:471px"><path d="M0 5.5C2.5 1.5 5 0 8 0S13.5 1.5 16 5.5C13.5 9.5 11 11 8 11S2.5 9.5 0 5.5z" fill="#2b7bc2"/><circle cx="8" cy="5.5" r="3.6" fill="none" stroke="#fff" stroke-width="0.9"/><circle cx="6.9" cy="4.3" r="0.8" fill="#fff"/></svg>
<div class="tx" style="left:1140px;top:467px;width:234px;height:20px;line-height:20px;font-size:12.6px;color:#fff;overflow:hidden;"><span style="position:absolute;left:0;top:0;transform-origin:0 0;transform:scaleX(0.925)">Welcome to the Q1 team Allan group.Use the group</span></div>
<div class="tx" style="left:1378px;top:467px;width:152px;height:20px;line-height:20px;font-size:12.6px;color:#fff;overflow:hidden;"><span style="position:absolute;left:0;top:0;transform-origin:0 0;transform:scaleX(0.925)">Q1 team Allan</span></div>
<div class="a" style="left:64px;top:466px;width:1466px;height:1px;background:#707070"></div>
<div class="a" style="left:45px;top:487px;width:73px;height:19px;background:#8fa7c3;"></div>
<div class="mbox" style="left:50px;top:489px"><i></i></div>
<div class="tx" style="left:-284px;top:487px;width:400px;height:20px;line-height:20px;font-size:12.6px;font-weight:bold;"><span style="position:absolute;right:0;top:0;transform-origin:100% 0;transform:scaleX(1)">1</span></div>
<svg width="14" height="12" viewBox="0 0 14 12" style="position:absolute;left:142px;top:491px"><circle cx="9.7" cy="1.9" r="2" fill="#2b7bbf"/><path d="M7 8.4C7 5.8 8.2 4.5 10 4.5S14 5.6 14 8.4z" fill="#2b7bbf"/><path d="M-0.6 11.4C-0.6 7.6 1.2 5.3 3.75 5.3S8.1 7.6 8.1 11.4z" fill="#fff"/><circle cx="3.7" cy="3.4" r="2.9" fill="#fff"/><circle cx="3.7" cy="3.4" r="2.3" fill="#2b7bbf"/><path d="M0 10.8C0 7.8 1.5 6.1 3.75 6.1S7.5 7.8 7.5 10.8z" fill="#2b7bbf"/></svg>
<div class="tx" style="left:181px;top:487px;width:174px;height:20px;line-height:20px;font-size:12.6px;font-weight:bold;overflow:hidden;"><span style="position:absolute;left:0;top:0;transform-origin:0 0;transform:scaleX(0.937)">Group test YY</span></div>
<div class="a" style="left:355px;top:487px;width:20px;height:19px;background:#d8d8d8;"></div>
<div class="a" style="left:375px;top:487px;width:1155px;height:19px;background:#d8d8d8;"></div>
<div class="a" style="left:45px;top:486px;width:1485px;height:1px;background:#707070"></div>
<div class="a" style="left:64px;top:507px;width:54px;height:19px;background:#8fa7c3;"></div>
<div class="a" style="left:64px;top:507px;width:1px;height:19px;background:#6f7c8c;"></div>
<div class="mbox" style="left:69px;top:509px"><i></i></div>
<div class="tx" style="left:-284px;top:507px;width:400px;height:20px;line-height:20px;font-size:12.6px;font-weight:bold;"><span style="position:absolute;right:0;top:0;transform-origin:100% 0;transform:scaleX(1)">2</span></div>
<svg width="15" height="16" viewBox="0 0 15 16" style="position:absolute;left:142px;top:509px"><path d="M0 0h14v8.5h-9l-3 3v-3h-2z" fill="#2b7bbf"/><rect x="2" y="3" width="2" height="2" fill="#fff"/><rect x="6" y="3" width="2" height="2" fill="#fff"/><rect x="10" y="3" width="2" height="2" fill="#fff"/><path d="M6.5 6.5h8v6.5h-1.5v2l-2-2h-4.5z" fill="#2b7bbf" stroke="#fff" stroke-width="1"/><rect x="8.3" y="9" width="1.3" height="1.3" fill="#fff"/><rect x="10.3" y="9" width="1.3" height="1.3" fill="#fff"/><rect x="12.2" y="9" width="1.3" height="1.3" fill="#fff"/></svg>
<div class="tx" style="left:181px;top:507px;width:174px;height:20px;line-height:20px;font-size:12.6px;font-weight:bold;overflow:hidden;"><span style="position:absolute;left:0;top:0;transform-origin:0 0;transform:scaleX(0.937)">Group test YY</span></div>
<div class="a" style="left:355px;top:507px;width:20px;height:19px;background:#d8d8d8;"></div>
<div class="tx" style="left:377px;top:507px;width:1000px;height:20px;line-height:20px;font-size:12.6px;font-weight:bold;"><span style="position:absolute;left:0;top:0;transform-origin:0 0;transform:scaleX(0.937)">The new Group test YY group is ready</span></div>
<div class="a" style="left:631px;top:507px;width:48px;height:19px;background:#f0f0f0;"></div>
<div class="cb" style="left:649px;top:510px"></div>
<div class="a" style="left:679px;top:507px;width:57px;height:19px;background:#d8d8d8;"></div>
<div class="tx" style="left:738px;top:507px;width:253px;height:20px;line-height:20px;font-size:12.6px;font-weight:bold;overflow:hidden;"><span style="position:absolute;left:0;top:0;transform-origin:0 0;transform:scaleX(0.937)">Group test YY</span></div>
<div class="tx" style="left:717px;top:507px;width:400px;height:20px;line-height:20px;font-size:12.6px;font-weight:bold;"><span style="position:absolute;right:0;top:0;transform-origin:100% 0;transform:scaleX(0.99)">3/3/2022 12:43 PM</span></div>
<svg width="16" height="11" viewBox="0 0 16 11" style="position:absolute;left:1122px;top:511px"><path d="M0 5.5C2.5 1.5 5 0 8 0S13.5 1.5 16 5.5C13.5 9.5 11 11 8 11S2.5 9.5 0 5.5z" fill="#2b7bc2"/><circle cx="8" cy="5.5" r="3.6" fill="none" stroke="#fff" stroke-width="0.9"/><circle cx="6.9" cy="4.3" r="0.8" fill="#fff"/></svg>
<div class="tx" style="left:1140px;top:507px;width:234px;height:20px;line-height:20px;font-size:12.6px;font-weight:bold;overflow:hidden;"><span style="position:absolute;left:0;top:0;transform-origin:0 0;transform:scaleX(0.937)">Welcome to the Group test YY group.Use the group</span></div>
<div class="a" style="left:1376px;top:507px;width:154px;height:19px;background:#d8d8d8;"></div>
<div class="a" style="left:45px;top:506px;width:1485px;height:1px;background:#707070"></div>
<div class="a" style="left:119px;top:527px;width:1411px;height:19px;background:#7bb8ec;"></div>
<div class="a" style="left:84px;top:527px;width:35px;height:19px;background:#a7cbeb;"></div>
<div class="a" style="left:119px;top:527px;width:1px;height:19px;background:#f4f9fd;"></div>
<div class="a" style="left:138px;top:527px;width:1px;height:19px;background:#f4f9fd;"></div>
<div class="a" style="left:158px;top:527px;width:1px;height:19px;background:#f4f9fd;"></div>
<div class="a" style="left:355px;top:527px;width:1px;height:19px;background:#f4f9fd;"></div>
<div class="a" style="left:375px;top:527px;width:1px;height:19px;background:#f4f9fd;"></div>
<div class="a" style="left:631px;top:527px;width:1px;height:19px;background:#f4f9fd;"></div>
<div class="a" style="left:678px;top:527px;width:1px;height:19px;background:#f4f9fd;"></div>
<div class="a" style="left:735px;top:527px;width:1px;height:19px;background:#f4f9fd;"></div>
<div class="a" style="left:991px;top:527px;width:1px;height:19px;background:#f4f9fd;"></div>
<div class="a" style="left:1119px;top:527px;width:1px;height:19px;background:#f4f9fd;"></div>
<div class="a" style="left:1375px;top:527px;width:1px;height:19px;background:#f4f9fd;"></div>
<div class="tx" style="left:-284px;top:527px;width:400px;height:20px;line-height:20px;font-size:12.6px;color:#fff;"><span style="position:absolute;right:0;top:0;transform-origin:100% 0;transform:scaleX(1)">3</span></div>
<svg width="16" height="16" viewBox="0 0 16 16" style="position:absolute;left:141px;top:528px"><path d="M0 0h16v11.5h-8.5l-3.5 4v-4h-4z" fill="#fff"/></svg>
<svg width="14" height="14" viewBox="0 0 14 14" style="position:absolute;left:142px;top:529px"><path d="M0 0h14v9.5h-8.5l-3 3.5v-3.5h-2.5z" fill="#2b7bbf"/><rect x="2.5" y="3.5" width="2" height="2" fill="#fff"/><rect x="6" y="3.5" width="2" height="2" fill="#fff"/><rect x="9.5" y="3.5" width="2" height="2" fill="#fff"/></svg>
<div class="tx" style="left:181px;top:527px;width:174px;height:20px;line-height:20px;font-size:12.6px;color:#fff;overflow:hidden;"><span style="position:absolute;left:0;top:0;transform-origin:0 0;transform:scaleX(0.925)">Group test YY</span></div>
<div class="a" style="left:355px;top:527px;width:20px;height:19px;background:#a7cbeb;"></div>
<div class="tx" style="left:377px;top:527px;width:1000px;height:20px;line-height:20px;font-size:12.6px;color:#fff;"><span style="position:absolute;left:0;top:0;transform-origin:0 0;transform:scaleX(0.925)">The new Group test YY group is ready</span></div>
<div class="a" style="left:631px;top:527px;width:48px;height:19px;background:#b8d6ef;"></div>
<div class="cb" style="left:649px;top:530px"></div>
<div class="a" style="left:679px;top:527px;width:57px;height:19px;background:#b8d6ef;"></div>
<div class="cb" style="left:702px;top:530px"></div>
<div class="tx" style="left:738px;top:527px;width:253px;height:20px;line-height:20px;font-size:12.6px;color:#fff;overflow:hidden;"><span style="position:absolute;left:0;top:0;transform-origin:0 0;transform:scaleX(0.925)">Group test YY</span></div>
<div class="tx" style="left:717px;top:527px;width:400px;height:20px;line-height:20px;font-size:12.6px;color:#fff;"><span style="position:absolute;right:0;top:0;transform-origin:100% 0;transform:scaleX(0.9)">3/3/2022 12:43 PM</span></div>
<div class="a" style="left:1120px;top:528px;width:19px;height:18px;background:#fff;"></div>
<svg width="16" height="11" viewBox="0 0 16 11" style="position:absolute;left:1122px;top:531px"><path d="M0 5.5C2.5 1.5 5 0 8 0S13.5 1.5 16 5.5C13.5 9.5 11 11 8 11S2.5 9.5 0 5.5z" fill="#2b7bc2"/><circle cx="8" cy="5.5" r="3.6" fill="none" stroke="#fff" stroke-width="0.9"/><circle cx="6.9" cy="4.3" r="0.8" fill="#fff"/></svg>
<div class="tx" style="left:1140px;top:527px;width:234px;height:20px;line-height:20px;font-size:12.6px;color:#fff;overflow:hidden;"><span style="position:absolute;left:0;top:0;transform-origin:0 0;transform:scaleX(0.925)">Welcome to the Group test YY group.Use the group</span></div>
<div class="tx" style="left:1378px;top:527px;width:152px;height:20px;line-height:20px;font-size:12.6px;color:#fff;overflow:hidden;"><span style="position:absolute;left:0;top:0;transform-origin:0 0;transform:scaleX(0.925)">Group test YY</span></div>
<div class="a" style="left:64px;top:526px;width:1466px;height:1px;background:#707070"></div>
<div class="a" style="left:45px;top:547px;width:73px;height:19px;background:#8fa7c3;"></div>
<div class="mbox" style="left:50px;top:549px"><i></i></div>
<div class="tx" style="left:-284px;top:547px;width:400px;height:20px;line-height:20px;font-size:12.6px;font-weight:bold;"><span style="position:absolute;right:0;top:0;transform-origin:100% 0;transform:scaleX(1)">1</span></div>
<svg width="14" height="12" viewBox="0 0 14 12" style="position:absolute;left:142px;top:551px"><circle cx="9.7" cy="1.9" r="2" fill="#2b7bbf"/><path d="M7 8.4C7 5.8 8.2 4.5 10 4.5S14 5.6 14 8.4z" fill="#2b7bbf"/><path d="M-0.6 11.4C-0.6 7.6 1.2 5.3 3.75 5.3S8.1 7.6 8.1 11.4z" fill="#fff"/><circle cx="3.7" cy="3.4" r="2.9" fill="#fff"/><circle cx="3.7" cy="3.4" r="2.3" fill="#2b7bbf"/><path d="M0 10.8C0 7.8 1.5 6.1 3.75 6.1S7.5 7.8 7.5 10.8z" fill="#2b7bbf"/></svg>
<div class="tx" style="left:181px;top:547px;width:174px;height:20px;line-height:20px;font-size:12.6px;font-weight:bold;overflow:hidden;"><span style="position:absolute;left:0;top:0;transform-origin:0 0;transform:scaleX(0.937)">2497</span></div>
<div class="a" style="left:355px;top:547px;width:20px;height:19px;background:#d8d8d8;"></div>
<div class="a" style="left:375px;top:547px;width:1155px;height:19px;background:#d8d8d8;"></div>
<div class="a" style="left:45px;top:546px;width:1485px;height:1px;background:#707070"></div>
<div class="a" style="left:64px;top:567px;width:54px;height:19px;background:#8fa7c3;"></div>
<div class="a" style="left:64px;top:567px;width:1px;height:19px;background:#6f7c8c;"></div>
<div class="mbox" style="left:69px;top:569px"><i></i></div>
<div class="tx" style="left:-284px;top:567px;width:400px;height:20px;line-height:20px;font-size:12.6px;font-weight:bold;"><span style="position:absolute;right:0;top:0;transform-origin:100% 0;transform:scaleX(1)">2</span></div>
<svg width="15" height="16" viewBox="0 0 15 16" style="position:absolute;left:142px;top:569px"><path d="M0 0h14v8.5h-9l-3 3v-3h-2z" fill="#2b7bbf"/><rect x="2" y="3" width="2" height="2" fill="#fff"/><rect x="6" y="3" width="2" height="2" fill="#fff"/><rect x="10" y="3" width="2" height="2" fill="#fff"/><path d="M6.5 6.5h8v6.5h-1.5v2l-2-2h-4.5z" fill="#2b7bbf" stroke="#fff" stroke-width="1"/><rect x="8.3" y="9" width="1.3" height="1.3" fill="#fff"/><rect x="10.3" y="9" width="1.3" height="1.3" fill="#fff"/><rect x="12.2" y="9" width="1.3" height="1.3" fill="#fff"/></svg>
<div class="tx" style="left:181px;top:567px;width:174px;height:20px;line-height:20px;font-size:12.6px;font-weight:bold;overflow:hidden;"><span style="position:absolute;left:0;top:0;transform-origin:0 0;transform:scaleX(0.937)">2497</span></div>
<div class="a" style="left:355px;top:567px;width:20px;height:19px;background:#d8d8d8;"></div>
<div class="tx" style="left:377px;top:567px;width:1000px;height:20px;line-height:20px;font-size:12.6px;font-weight:bold;"><span style="position:absolute;left:0;top:0;transform-origin:0 0;transform:scaleX(0.937)">The new 2497 group is ready</span></div>
<div class="a" style="left:631px;top:567px;width:48px;height:19px;background:#f0f0f0;"></div>
<div class="cb" style="left:649px;top:570px"></div>
<div class="a" style="left:679px;top:567px;width:57px;height:19px;background:#d8d8d8;"></div>
<div class="tx" style="left:738px;top:567px;width:253px;height:20px;line-height:20px;font-size:12.6px;font-weight:bold;overflow:hidden;"><span style="position:absolute;left:0;top:0;transform-origin:0 0;transform:scaleX(0.937)">2497</span></div>
<div class="tx" style="left:717px;top:567px;width:400px;height:20px;line-height:20px;font-size:12.6px;font-weight:bold;"><span style="position:absolute;right:0;top:0;transform-origin:100% 0;transform:scaleX(0.99)">1/14/2022 05:12 PM</span></div>
<svg width="16" height="11" viewBox="0 0 16 11" style="position:absolute;left:1122px;top:571px"><path d="M0 5.5C2.5 1.5 5 0 8 0S13.5 1.5 16 5.5C13.5 9.5 11 11 8 11S2.5 9.5 0 5.5z" fill="#2b7bc2"/><circle cx="8" cy="5.5" r="3.6" fill="none" stroke="#fff" stroke-width="0.9"/><circle cx="6.9" cy="4.3" r="0.8" fill="#fff"/></svg>
<div class="tx" style="left:1140px;top:567px;width:234px;height:20px;line-height:20px;font-size:12.6px;font-weight:bold;overflow:hidden;"><span style="position:absolute;left:0;top:0;transform-origin:0 0;transform:scaleX(0.937)">Welcome to the 2497 group.Use the group to share</span></div>
<div class="a" style="left:1376px;top:567px;width:154px;height:19px;background:#d8d8d8;"></div>
<div class="a" style="left:45px;top:566px;width:1485px;height:1px;background:#707070"></div>
<div class="a" style="left:84px;top:587px;width:34px;height:19px;background:#c9d9e7;"></div>
<div class="tx" style="left:-284px;top:587px;width:400px;height:20px;line-height:20px;font-size:12.6px;color:#000;"><span style="position:absolute;right:0;top:0;transform-origin:100% 0;transform:scaleX(1)">3</span></div>
<svg width="14" height="14" viewBox="0 0 14 14" style="position:absolute;left:142px;top:589px"><path d="M0 0h14v9.5h-8.5l-3 3.5v-3.5h-2.5z" fill="#2b7bbf"/><rect x="2.5" y="3.5" width="2" height="2" fill="#fff"/><rect x="6" y="3.5" width="2" height="2" fill="#fff"/><rect x="9.5" y="3.5" width="2" height="2" fill="#fff"/></svg>
<div class="tx" style="left:181px;top:587px;width:174px;height:20px;line-height:20px;font-size:12.6px;overflow:hidden;"><span style="position:absolute;left:0;top:0;transform-origin:0 0;transform:scaleX(0.925)">2497</span></div>
<div class="a" style="left:355px;top:587px;width:20px;height:19px;background:#d8d8d8;"></div>
<div class="tx" style="left:377px;top:587px;width:1000px;height:20px;line-height:20px;font-size:12.6px;"><span style="position:absolute;left:0;top:0;transform-origin:0 0;transform:scaleX(0.925)">The new 2497 group is ready</span></div>
<div class="a" style="left:631px;top:587px;width:48px;height:19px;background:#f0f0f0;"></div>
<div class="cb" style="left:649px;top:590px"></div>
<div class="a" style="left:679px;top:587px;width:57px;height:19px;background:#f0f0f0;"></div>
<div class="cb" style="left:702px;top:590px"></div>
<div class="tx" style="left:738px;top:587px;width:253px;height:20px;line-height:20px;font-size:12.6px;overflow:hidden;"><span style="position:absolute;left:0;top:0;transform-origin:0 0;transform:scaleX(0.925)">2497</span></div>
<div class="tx" style="left:717px;top:587px;width:400px;height:20px;line-height:20px;font-size:12.6px;"><span style="position:absolute;right:0;top:0;transform-origin:100% 0;transform:scaleX(0.9)">1/14/2022 05:12 PM</span></div>
<svg width="16" height="11" viewBox="0 0 16 11" style="position:absolute;left:1122px;top:591px"><path d="M0 5.5C2.5 1.5 5 0 8 0S13.5 1.5 16 5.5C13.5 9.5 11 11 8 11S2.5 9.5 0 5.5z" fill="#2b7bc2"/><circle cx="8" cy="5.5" r="3.6" fill="none" stroke="#fff" stroke-width="0.9"/><circle cx="6.9" cy="4.3" r="0.8" fill="#fff"/></svg>
<div class="tx" style="left:1140px;top:587px;width:234px;height:20px;line-height:20px;font-size:12.6px;overflow:hidden;"><span style="position:absolute;left:0;top:0;transform-origin:0 0;transform:scaleX(0.925)">Welcome to the 2497 group.Use the group to share</span></div>
<div class="tx" style="left:1378px;top:587px;width:152px;height:20px;line-height:20px;font-size:12.6px;overflow:hidden;"><span style="position:absolute;left:0;top:0;transform-origin:0 0;transform:scaleX(0.925)">2497</span></div>
<div class="a" style="left:64px;top:586px;width:1466px;height:1px;background:#707070"></div>
<div class="a" style="left:45px;top:607px;width:73px;height:19px;background:#8fa7c3;"></div>
<div class="mbox" style="left:50px;top:609px"><i></i></div>
<div class="tx" style="left:-284px;top:607px;width:400px;height:20px;line-height:20px;font-size:12.6px;font-weight:bold;"><span style="position:absolute;right:0;top:0;transform-origin:100% 0;transform:scaleX(1)">1</span></div>
<svg width="14" height="12" viewBox="0 0 14 12" style="position:absolute;left:142px;top:611px"><circle cx="9.7" cy="1.9" r="2" fill="#2b7bbf"/><path d="M7 8.4C7 5.8 8.2 4.5 10 4.5S14 5.6 14 8.4z" fill="#2b7bbf"/><path d="M-0.6 11.4C-0.6 7.6 1.2 5.3 3.75 5.3S8.1 7.6 8.1 11.4z" fill="#fff"/><circle cx="3.7" cy="3.4" r="2.9" fill="#fff"/><circle cx="3.7" cy="3.4" r="2.3" fill="#2b7bbf"/><path d="M0 10.8C0 7.8 1.5 6.1 3.75 6.1S7.5 7.8 7.5 10.8z" fill="#2b7bbf"/></svg>
<div class="tx" style="left:181px;top:607px;width:174px;height:20px;line-height:20px;font-size:12.6px;font-weight:bold;overflow:hidden;"><span style="position:absolute;left:0;top:0;transform-origin:0 0;transform:scaleX(0.937)">testM365gp</span></div>
<div class="a" style="left:355px;top:607px;width:20px;height:19px;background:#d8d8d8;"></div>
<div class="a" style="left:375px;top:607px;width:1155px;height:19px;background:#d8d8d8;"></div>
<div class="a" style="left:45px;top:606px;width:1485px;height:1px;background:#707070"></div>
<div class="a" style="left:64px;top:627px;width:54px;height:19px;background:#8fa7c3;"></div>
<div class="a" style="left:64px;top:627px;width:1px;height:19px;background:#6f7c8c;"></div>
<div class="mbox" style="left:69px;top:629px"><i></i></div>
<div class="tx" style="left:-284px;top:627px;width:400px;height:20px;line-height:20px;font-size:12.6px;font-weight:bold;"><span style="position:absolute;right:0;top:0;transform-origin:100% 0;transform:scaleX(1)">2</span></div>
<svg width="15" height="16" viewBox="0 0 15 16" style="position:absolute;left:142px;top:629px"><path d="M0 0h14v8.5h-9l-3 3v-3h-2z" fill="#2b7bbf"/><rect x="2" y="3" width="2" height="2" fill="#fff"/><rect x="6" y="3" width="2" height="2" fill="#fff"/><rect x="10" y="3" width="2" height="2" fill="#fff"/><path d="M6.5 6.5h8v6.5h-1.5v2l-2-2h-4.5z" fill="#2b7bbf" stroke="#fff" stroke-width="1"/><rect x="8.3" y="9" width="1.3" height="1.3" fill="#fff"/><rect x="10.3" y="9" width="1.3" height="1.3" fill="#fff"/><rect x="12.2" y="9" width="1.3" height="1.3" fill="#fff"/></svg>
<div class="tx" style="left:181px;top:627px;width:174px;height:20px;line-height:20px;font-size:12.6px;font-weight:bold;overflow:hidden;"><span style="position:absolute;left:0;top:0;transform-origin:0 0;transform:scaleX(0.937)">testM365gp</span></div>
<div class="a" style="left:355px;top:627px;width:20px;height:19px;background:#d8d8d8;"></div>
<div class="tx" style="left:377px;top:627px;width:1000px;height:20px;line-height:20px;font-size:12.6px;font-weight:bold;"><span style="position:absolute;left:0;top:0;transform-origin:0 0;transform:scaleX(0.937)">The new testM365gp group is ready</span></div>
<div class="a" style="left:631px;top:627px;width:48px;height:19px;background:#f0f0f0;"></div>
<div class="cb" style="left:649px;top:630px"></div>
<div class="a" style="left:679px;top:627px;width:57px;height:19px;background:#d8d8d8;"></div>
<div class="tx" style="left:738px;top:627px;width:253px;height:20px;line-height:20px;font-size:12.6px;font-weight:bold;overflow:hidden;"><span style="position:absolute;left:0;top:0;transform-origin:0 0;transform:scaleX(0.937)">testM365gp</span></div>
<div class="tx" style="left:717px;top:627px;width:400px;height:20px;line-height:20px;font-size:12.6px;font-weight:bold;"><span style="position:absolute;right:0;top:0;transform-origin:100% 0;transform:scaleX(0.99)">1/14/2022 04:48 PM</span></div>
<svg width="16" height="11" viewBox="0 0 16 11" style="position:absolute;left:1122px;top:631px"><path d="M0 5.5C2.5 1.5 5 0 8 0S13.5 1.5 16 5.5C13.5 9.5 11 11 8 11S2.5 9.5 0 5.5z" fill="#2b7bc2"/><circle cx="8" cy="5.5" r="3.6" fill="none" stroke="#fff" stroke-width="0.9"/><circle cx="6.9" cy="4.3" r="0.8" fill="#fff"/></svg>
<div class="tx" style="left:1140px;top:627px;width:234px;height:20px;line-height:20px;font-size:12.6px;font-weight:bold;overflow:hidden;"><span style="position:absolute;left:0;top:0;transform-origin:0 0;transform:scaleX(0.937)">Welcome to the testM365gp group.Use the group</span></div>
<div class="a" style="left:1376px;top:627px;width:154px;height:19px;background:#d8d8d8;"></div>
<div class="a" style="left:45px;top:626px;width:1485px;height:1px;background:#707070"></div>
<div class="a" style="left:84px;top:647px;width:34px;height:19px;background:#c9d9e7;"></div>
<div class="tx" style="left:-284px;top:647px;width:400px;height:20px;line-height:20px;font-size:12.6px;color:#000;"><span style="position:absolute;right:0;top:0;transform-origin:100% 0;transform:scaleX(1)">3</span></div>
<svg width="14" height="14" viewBox="0 0 14 14" style="position:absolute;left:142px;top:649px"><path d="M0 0h14v9.5h-8.5l-3 3.5v-3.5h-2.5z" fill="#2b7bbf"/><rect x="2.5" y="3.5" width="2" height="2" fill="#fff"/><rect x="6" y="3.5" width="2" height="2" fill="#fff"/><rect x="9.5" y="3.5" width="2" height="2" fill="#fff"/></svg>
<div class="tx" style="left:181px;top:647px;width:174px;height:20px;line-height:20px;font-size:12.6px;overflow:hidden;"><span style="position:absolute;left:0;top:0;transform-origin:0 0;transform:scaleX(0.925)">testM365gp</span></div>
<div class="a" style="left:355px;top:647px;width:20px;height:19px;background:#d8d8d8;"></div>
<div class="tx" style="left:377px;top:647px;width:1000px;height:20px;line-height:20px;font-size:12.6px;"><span style="position:absolute;left:0;top:0;transform-origin:0 0;transform:scaleX(0.925)">The new testM365gp group is ready</span></div>
<div class="a" style="left:631px;top:647px;width:48px;height:19px;background:#f0f0f0;"></div>
<div class="cb" style="left:649px;top:650px"></div>
<div class="a" style="left:679px;top:647px;width:57px;height:19px;background:#f0f0f0;"></div>
<div class="cb" style="left:702px;top:650px"></div>
<div class="tx" style="left:738px;top:647px;width:253px;height:20px;line-height:20px;font-size:12.6px;overflow:hidden;"><span style="position:absolute;left:0;top:0;transform-origin:0 0;transform:scaleX(0.925)">testM365gp</span></div>
<div class="tx" style="left:717px;top:647px;width:400px;height:20px;line-height:20px;font-size:12.6px;"><span style="position:absolute;right:0;top:0;transform-origin:100% 0;transform:scaleX(0.9)">1/14/2022 04:48 PM</span></div>
<svg width="16" height="11" viewBox="0 0 16 11" style="position:absolute;left:1122px;top:651px"><path d="M0 5.5C2.5 1.5 5 0 8 0S13.5 1.5 16 5.5C13.5 9.5 11 11 8 11S2.5 9.5 0 5.5z" fill="#2b7bc2"/><circle cx="8" cy="5.5" r="3.6" fill="none" stroke="#fff" stroke-width="0.9"/><circle cx="6.9" cy="4.3" r="0.8" fill="#fff"/></svg>
<div class="tx" style="left:1140px;top:647px;width:234px;height:20px;line-height:20px;font-size:12.6px;overflow:hidden;"><span style="position:absolute;left:0;top:0;transform-origin:0 0;transform:scaleX(0.925)">Welcome to the testM365gp group.Use the group</span></div>
<div class="tx" style="left:1378px;top:647px;width:152px;height:20px;line-height:20px;font-size:12.6px;overflow:hidden;"><span style="position:absolute;left:0;top:0;transform-origin:0 0;transform:scaleX(0.925)">testM365gp</span></div>
<div class="a" style="left:64px;top:646px;width:1466px;height:1px;background:#707070"></div>
<div class="a" style="left:45px;top:667px;width:73px;height:19px;background:#8fa7c3;"></div>
<div class="mbox" style="left:50px;top:669px"><i></i></div>
<div class="tx" style="left:-284px;top:667px;width:400px;height:20px;line-height:20px;font-size:12.6px;font-weight:bold;"><span style="position:absolute;right:0;top:0;transform-origin:100% 0;transform:scaleX(1)">1</span></div>
<svg width="14" height="12" viewBox="0 0 14 12" style="position:absolute;left:142px;top:671px"><circle cx="9.7" cy="1.9" r="2" fill="#2b7bbf"/><path d="M7 8.4C7 5.8 8.2 4.5 10 4.5S14 5.6 14 8.4z" fill="#2b7bbf"/><path d="M-0.6 11.4C-0.6 7.6 1.2 5.3 3.75 5.3S8.1 7.6 8.1 11.4z" fill="#fff"/><circle cx="3.7" cy="3.4" r="2.9" fill="#fff"/><circle cx="3.7" cy="3.4" r="2.3" fill="#2b7bbf"/><path d="M0 10.8C0 7.8 1.5 6.1 3.75 6.1S7.5 7.8 7.5 10.8z" fill="#2b7bbf"/></svg>
<div class="tx" style="left:181px;top:667px;width:174px;height:20px;line-height:20px;font-size:12.6px;font-weight:bold;overflow:hidden;"><span style="position:absolute;left:0;top:0;transform-origin:0 0;transform:scaleX(0.937)">Sales US</span></div>
<svg width="13" height="14" viewBox="0 0 13 14" style="position:absolute;left:359px;top:669px"><circle cx="4" cy="2" r="2" fill="#8649b2"/><rect x="9" y="0.4" width="3" height="3" rx="1.2" fill="#8649b2"/><path d="M8.6 4.1h4v4.3a2.6 2.6 0 0 1-2.6 2.6h-1.4z" fill="#8649b2"/><path d="M0 5h8v5a4 4 0 0 1-8 0z" fill="#8649b2"/></svg>
<div class="a" style="left:375px;top:667px;width:1155px;height:19px;background:#d8d8d8;"></div>
<div class="a" style="left:45px;top:666px;width:1485px;height:1px;background:#707070"></div>
<div class="a" style="left:64px;top:687px;width:54px;height:19px;background:#8fa7c3;"></div>
<div class="a" style="left:64px;top:687px;width:1px;height:19px;background:#6f7c8c;"></div>
<div class="mbox" style="left:69px;top:689px"><i></i></div>
<div class="tx" style="left:-284px;top:687px;width:400px;height:20px;line-height:20px;font-size:12.6px;font-weight:bold;"><span style="position:absolute;right:0;top:0;transform-origin:100% 0;transform:scaleX(1)">2</span></div>
<svg width="15" height="16" viewBox="0 0 15 16" style="position:absolute;left:142px;top:689px"><path d="M0 0h14v8.5h-9l-3 3v-3h-2z" fill="#2b7bbf"/><rect x="2" y="3" width="2" height="2" fill="#fff"/><rect x="6" y="3" width="2" height="2" fill="#fff"/><rect x="10" y="3" width="2" height="2" fill="#fff"/><path d="M6.5 6.5h8v6.5h-1.5v2l-2-2h-4.5z" fill="#2b7bbf" stroke="#fff" stroke-width="1"/><rect x="8.3" y="9" width="1.3" height="1.3" fill="#fff"/><rect x="10.3" y="9" width="1.3" height="1.3" fill="#fff"/><rect x="12.2" y="9" width="1.3" height="1.3" fill="#fff"/></svg>
<div class="tx" style="left:181px;top:687px;width:174px;height:20px;line-height:20px;font-size:12.6px;font-weight:bold;overflow:hidden;"><span style="position:absolute;left:0;top:0;transform-origin:0 0;transform:scaleX(0.937)">Sales US</span></div>
<svg width="13" height="14" viewBox="0 0 13 14" style="position:absolute;left:359px;top:689px"><circle cx="4" cy="2" r="2" fill="#8649b2"/><rect x="9" y="0.4" width="3" height="3" rx="1.2" fill="#8649b2"/><path d="M8.6 4.1h4v4.3a2.6 2.6 0 0 1-2.6 2.6h-1.4z" fill="#8649b2"/><path d="M0 5h8v5a4 4 0 0 1-8 0z" fill="#8649b2"/></svg>
<div class="tx" style="left:377px;top:687px;width:1000px;height:20px;line-height:20px;font-size:12.6px;font-weight:bold;"><span style="position:absolute;left:0;top:0;transform-origin:0 0;transform:scaleX(0.937)">The new Sales US group is ready</span></div>
<div class="a" style="left:631px;top:687px;width:48px;height:19px;background:#f0f0f0;"></div>
<div class="cb" style="left:649px;top:690px"></div>
<div class="a" style="left:679px;top:687px;width:57px;height:19px;background:#d8d8d8;"></div>
<div class="tx" style="left:738px;top:687px;width:253px;height:20px;line-height:20px;font-size:12.6px;font-weight:bold;overflow:hidden;"><span style="position:absolute;left:0;top:0;transform-origin:0 0;transform:scaleX(0.937)">Sales US</span></div>
<div class="tx" style="left:717px;top:687px;width:400px;height:20px;line-height:20px;font-size:12.6px;font-weight:bold;"><span style="position:absolute;right:0;top:0;transform-origin:100% 0;transform:scaleX(0.99)">10/30/2019 05:00 PM</span></div>
<svg width="16" height="11" viewBox="0 0 16 11" style="position:absolute;left:1122px;top:691px"><path d="M0 5.5C2.5 1.5 5 0 8 0S13.5 1.5 16 5.5C13.5 9.5 11 11 8 11S2.5 9.5 0 5.5z" fill="#2b7bc2"/><circle cx="8" cy="5.5" r="3.6" fill="none" stroke="#fff" stroke-width="0.9"/><circle cx="6.9" cy="4.3" r="0.8" fill="#fff"/></svg>
<div class="tx" style="left:1140px;top:687px;width:234px;height:20px;line-height:20px;font-size:12.6px;font-weight:bold;overflow:hidden;"><span style="position:absolute;left:0;top:0;transform-origin:0 0;transform:scaleX(0.937)">Welcome to the Sales US group.Use the group to</span></div>
<div class="a" style="left:1376px;top:687px;width:154px;height:19px;background:#d8d8d8;"></div>
<div class="a" style="left:45px;top:686px;width:1485px;height:1px;background:#707070"></div>
<div class="a" style="left:84px;top:707px;width:34px;height:19px;background:#c9d9e7;"></div>
<div class="tx" style="left:-284px;top:707px;width:400px;height:20px;line-height:20px;font-size:12.6px;color:#000;"><span style="position:absolute;right:0;top:0;transform-origin:100% 0;transform:scaleX(1)">3</span></div>
<svg width="14" height="14" viewBox="0 0 14 14" style="position:absolute;left:142px;top:709px"><path d="M0 0h14v9.5h-8.5l-3 3.5v-3.5h-2.5z" fill="#2b7bbf"/><rect x="2.5" y="3.5" width="2" height="2" fill="#fff"/><rect x="6" y="3.5" width="2" height="2" fill="#fff"/><rect x="9.5" y="3.5" width="2" height="2" fill="#fff"/></svg>
<div class="tx" style="left:181px;top:707px;width:174px;height:20px;line-height:20px;font-size:12.6px;overflow:hidden;"><span style="position:absolute;left:0;top:0;transform-origin:0 0;transform:scaleX(0.925)">Sales US</span></div>
<svg width="13" height="14" viewBox="0 0 13 14" style="position:absolute;left:359px;top:709px"><circle cx="4" cy="2" r="2" fill="#8649b2"/><rect x="9" y="0.4" width="3" height="3" rx="1.2" fill="#8649b2"/><path d="M8.6 4.1h4v4.3a2.6 2.6 0 0 1-2.6 2.6h-1.4z" fill="#8649b2"/><path d="M0 5h8v5a4 4 0 0 1-8 0z" fill="#8649b2"/></svg>
<div class="tx" style="left:377px;top:707px;width:1000px;height:20px;line-height:20px;font-size:12.6px;"><span style="position:absolute;left:0;top:0;transform-origin:0 0;transform:scaleX(0.925)">The new Sales US group is ready</span></div>
<div class="a" style="left:631px;top:707px;width:48px;height:19px;background:#f0f0f0;"></div>
<div class="cb" style="left:649px;top:710px"></div>
<div class="a" style="left:679px;top:707px;width:57px;height:19px;background:#f0f0f0;"></div>
<div class="cb" style="left:702px;top:710px"></div>
<div class="tx" style="left:738px;top:707px;width:253px;height:20px;line-height:20px;font-size:12.6px;overflow:hidden;"><span style="position:absolute;left:0;top:0;transform-origin:0 0;transform:scaleX(0.925)">Sales US</span></div>
<div class="tx" style="left:717px;top:707px;width:400px;height:20px;line-height:20px;font-size:12.6px;"><span style="position:absolute;right:0;top:0;transform-origin:100% 0;transform:scaleX(0.9)">10/30/2019 05:00 PM</span></div>
<svg width="16" height="11" viewBox="0 0 16 11" style="position:absolute;left:1122px;top:711px"><path d="M0 5.5C2.5 1.5 5 0 8 0S13.5 1.5 16 5.5C13.5 9.5 11 11 8 11S2.5 9.5 0 5.5z" fill="#2b7bc2"/><circle cx="8" cy="5.5" r="3.6" fill="none" stroke="#fff" stroke-width="0.9"/><circle cx="6.9" cy="4.3" r="0.8" fill="#fff"/></svg>
<div class="tx" style="left:1140px;top:707px;width:234px;height:20px;line-height:20px;font-size:12.6px;overflow:hidden;"><span style="position:absolute;left:0;top:0;transform-origin:0 0;transform:scaleX(0.925)">Welcome to the Sales US group.Use the group to</span></div>
<div class="tx" style="left:1378px;top:707px;width:152px;height:20px;line-height:20px;font-size:12.6px;overflow:hidden;"><span style="position:absolute;left:0;top:0;transform-origin:0 0;transform:scaleX(0.925)">Sales US</span></div>
<div class="a" style="left:64px;top:706px;width:1466px;height:1px;background:#707070"></div>
<div class="a" style="left:45px;top:727px;width:73px;height:19px;background:#8fa7c3;"></div>
<div class="mbox" style="left:50px;top:729px"><i></i></div>
<div class="tx" style="left:-284px;top:727px;width:400px;height:20px;line-height:20px;font-size:12.6px;font-weight:bold;"><span style="position:absolute;right:0;top:0;transform-origin:100% 0;transform:scaleX(1)">1</span></div>
<svg width="14" height="12" viewBox="0 0 14 12" style="position:absolute;left:142px;top:731px"><circle cx="9.7" cy="1.9" r="2" fill="#2b7bbf"/><path d="M7 8.4C7 5.8 8.2 4.5 10 4.5S14 5.6 14 8.4z" fill="#2b7bbf"/><path d="M-0.6 11.4C-0.6 7.6 1.2 5.3 3.75 5.3S8.1 7.6 8.1 11.4z" fill="#fff"/><circle cx="3.7" cy="3.4" r="2.9" fill="#fff"/><circle cx="3.7" cy="3.4" r="2.3" fill="#2b7bbf"/><path d="M0 10.8C0 7.8 1.5 6.1 3.75 6.1S7.5 7.8 7.5 10.8z" fill="#2b7bbf"/></svg>
<div class="tx" style="left:181px;top:727px;width:174px;height:20px;line-height:20px;font-size:12.6px;font-weight:bold;overflow:hidden;"><span style="position:absolute;left:0;top:0;transform-origin:0 0;transform:scaleX(0.937)">Team A</span></div>
<svg width="13" height="14" viewBox="0 0 13 14" style="position:absolute;left:359px;top:729px"><circle cx="4" cy="2" r="2" fill="#8649b2"/><rect x="9" y="0.4" width="3" height="3" rx="1.2" fill="#8649b2"/><path d="M8.6 4.1h4v4.3a2.6 2.6 0 0 1-2.6 2.6h-1.4z" fill="#8649b2"/><path d="M0 5h8v5a4 4 0 0 1-8 0z" fill="#8649b2"/></svg>
<div class="a" style="left:375px;top:727px;width:1155px;height:19px;background:#d8d8d8;"></div>
<div class="a" style="left:45px;top:726px;width:1485px;height:1px;background:#707070"></div>
<div class="a" style="left:64px;top:747px;width:54px;height:19px;background:#8fa7c3;"></div>
<div class="a" style="left:64px;top:747px;width:1px;height:19px;background:#6f7c8c;"></div>
<div class="mbox" style="left:69px;top:749px"><i></i></div>
<div class="tx" style="left:-284px;top:747px;width:400px;height:20px;line-height:20px;font-size:12.6px;font-weight:bold;"><span style="position:absolute;right:0;top:0;transform-origin:100% 0;transform:scaleX(1)">2</span></div>
<svg width="15" height="16" viewBox="0 0 15 16" style="position:absolute;left:142px;top:749px"><path d="M0 0h14v8.5h-9l-3 3v-3h-2z" fill="#2b7bbf"/><rect x="2" y="3" width="2" height="2" fill="#fff"/><rect x="6" y="3" width="2" height="2" fill="#fff"/><rect x="10" y="3" width="2" height="2" fill="#fff"/><path d="M6.5 6.5h8v6.5h-1.5v2l-2-2h-4.5z" fill="#2b7bbf" stroke="#fff" stroke-width="1"/><rect x="8.3" y="9" width="1.3" height="1.3" fill="#fff"/><rect x="10.3" y="9" width="1.3" height="1.3" fill="#fff"/><rect x="12.2" y="9" width="1.3" height="1.3" fill="#fff"/></svg>
<div class="tx" style="left:181px;top:747px;width:174px;height:20px;line-height:20px;font-size:12.6px;font-weight:bold;overflow:hidden;"><span style="position:absolute;left:0;top:0;transform-origin:0 0;transform:scaleX(0.937)">Team A</span></div>
<svg width="13" height="14" viewBox="0 0 13 14" style="position:absolute;left:359px;top:749px"><circle cx="4" cy="2" r="2" fill="#8649b2"/><rect x="9" y="0.4" width="3" height="3" rx="1.2" fill="#8649b2"/><path d="M8.6 4.1h4v4.3a2.6 2.6 0 0 1-2.6 2.6h-1.4z" fill="#8649b2"/><path d="M0 5h8v5a4 4 0 0 1-8 0z" fill="#8649b2"/></svg>
<div class="tx" style="left:377px;top:747px;width:1000px;height:20px;line-height:20px;font-size:12.6px;font-weight:bold;"><span style="position:absolute;left:0;top:0;transform-origin:0 0;transform:scaleX(0.937)">Group huddle</span></div>
<div class="a" style="left:631px;top:747px;width:48px;height:19px;background:#f0f0f0;"></div>
<div class="cb" style="left:649px;top:750px"></div>
<div class="a" style="left:679px;top:747px;width:57px;height:19px;background:#d8d8d8;"></div>
<div class="tx" style="left:738px;top:747px;width:253px;height:20px;line-height:20px;font-size:12.6px;font-weight:bold;overflow:hidden;"><span style="position:absolute;left:0;top:0;transform-origin:0 0;transform:scaleX(0.937)">Diego Siciliani</span></div>
<div class="tx" style="left:717px;top:747px;width:400px;height:20px;line-height:20px;font-size:12.6px;font-weight:bold;"><span style="position:absolute;right:0;top:0;transform-origin:100% 0;transform:scaleX(0.99)">9/2/2021 11:51 AM</span></div>
<div class="a" style="left:1376px;top:747px;width:154px;height:19px;background:#d8d8d8;"></div>
<div class="a" style="left:45px;top:746px;width:1485px;height:1px;background:#707070"></div>
<div class="a" style="left:84px;top:767px;width:34px;height:19px;background:#c9d9e7;"></div>
<div class="tx" style="left:-284px;top:767px;width:400px;height:20px;line-height:20px;font-size:12.6px;color:#000;"><span style="position:absolute;right:0;top:0;transform-origin:100% 0;transform:scaleX(1)">3</span></div>
<svg width="14" height="14" viewBox="0 0 14 14" style="position:absolute;left:122px;top:769px"><circle cx="6.8" cy="6.8" r="6.1" fill="#fff" stroke="#7a7a7a" stroke-width="1.4"/><circle cx="6.8" cy="6.8" r="2.9" fill="#9a9a9a"/></svg>
<svg width="14" height="14" viewBox="0 0 14 14" style="position:absolute;left:142px;top:769px"><path d="M0 0h14v9.5h-8.5l-3 3.5v-3.5h-2.5z" fill="#2b7bbf"/><rect x="2.5" y="3.5" width="2" height="2" fill="#fff"/><rect x="6" y="3.5" width="2" height="2" fill="#fff"/><rect x="9.5" y="3.5" width="2" height="2" fill="#fff"/></svg>
<div class="tx" style="left:181px;top:767px;width:174px;height:20px;line-height:20px;font-size:12.6px;overflow:hidden;"><span style="position:absolute;left:0;top:0;transform-origin:0 0;transform:scaleX(0.925)">Team A</span></div>
<svg width="13" height="14" viewBox="0 0 13 14" style="position:absolute;left:359px;top:769px"><circle cx="4" cy="2" r="2" fill="#8649b2"/><rect x="9" y="0.4" width="3" height="3" rx="1.2" fill="#8649b2"/><path d="M8.6 4.1h4v4.3a2.6 2.6 0 0 1-2.6 2.6h-1.4z" fill="#8649b2"/><path d="M0 5h8v5a4 4 0 0 1-8 0z" fill="#8649b2"/></svg>
<div class="tx" style="left:377px;top:767px;width:1000px;height:20px;line-height:20px;font-size:12.6px;"><span style="position:absolute;left:0;top:0;transform-origin:0 0;transform:scaleX(0.925)">Group huddle</span></div>
<div class="a" style="left:631px;top:767px;width:48px;height:19px;background:#f0f0f0;"></div>
<div class="cb" style="left:649px;top:770px"></div>
<div class="a" style="left:679px;top:767px;width:57px;height:19px;background:#f0f0f0;"></div>
<div class="cb" style="left:702px;top:770px"></div>
<div class="tx" style="left:738px;top:767px;width:253px;height:20px;line-height:20px;font-size:12.6px;overflow:hidden;"><span style="position:absolute;left:0;top:0;transform-origin:0 0;transform:scaleX(0.925)">Diego Siciliani</span></div>
<div class="tx" style="left:717px;top:767px;width:400px;height:20px;line-height:20px;font-size:12.6px;"><span style="position:absolute;right:0;top:0;transform-origin:100% 0;transform:scaleX(0.9)">9/2/2021 11:51 AM</span></div>
<div class="tx" style="left:1378px;top:767px;width:152px;height:20px;line-height:20px;font-size:12.6px;overflow:hidden;"><span style="position:absolute;left:0;top:0;transform-origin:0 0;transform:scaleX(0.925)">[5] Team A;Allan Deyoung;D365</span></div>
<div class="a" style="left:64px;top:766px;width:1466px;height:1px;background:#707070"></div>
<div class="a" style="left:64px;top:787px;width:54px;height:19px;background:#8fa7c3;"></div>
<div class="a" style="left:64px;top:787px;width:1px;height:19px;background:#6f7c8c;"></div>
<div class="mbox" style="left:69px;top:789px"><i></i></div>
<div class="tx" style="left:-284px;top:787px;width:400px;height:20px;line-height:20px;font-size:12.6px;font-weight:bold;"><span style="position:absolute;right:0;top:0;transform-origin:100% 0;transform:scaleX(1)">2</span></div>
<svg width="15" height="16" viewBox="0 0 15 16" style="position:absolute;left:142px;top:789px"><path d="M0 0h14v8.5h-9l-3 3v-3h-2z" fill="#2b7bbf"/><rect x="2" y="3" width="2" height="2" fill="#fff"/><rect x="6" y="3" width="2" height="2" fill="#fff"/><rect x="10" y="3" width="2" height="2" fill="#fff"/><path d="M6.5 6.5h8v6.5h-1.5v2l-2-2h-4.5z" fill="#2b7bbf" stroke="#fff" stroke-width="1"/><rect x="8.3" y="9" width="1.3" height="1.3" fill="#fff"/><rect x="10.3" y="9" width="1.3" height="1.3" fill="#fff"/><rect x="12.2" y="9" width="1.3" height="1.3" fill="#fff"/></svg>
<div class="tx" style="left:181px;top:787px;width:174px;height:20px;line-height:20px;font-size:12.6px;font-weight:bold;overflow:hidden;"><span style="position:absolute;left:0;top:0;transform-origin:0 0;transform:scaleX(0.937)">Team A</span></div>
<svg width="13" height="14" viewBox="0 0 13 14" style="position:absolute;left:359px;top:789px"><circle cx="4" cy="2" r="2" fill="#8649b2"/><rect x="9" y="0.4" width="3" height="3" rx="1.2" fill="#8649b2"/><path d="M8.6 4.1h4v4.3a2.6 2.6 0 0 1-2.6 2.6h-1.4z" fill="#8649b2"/><path d="M0 5h8v5a4 4 0 0 1-8 0z" fill="#8649b2"/></svg>
<div class="tx" style="left:377px;top:787px;width:1000px;height:20px;line-height:20px;font-size:12.6px;font-weight:bold;"><span style="position:absolute;left:0;top:0;transform-origin:0 0;transform:scaleX(0.937)">The new Team A group is ready</span></div>
<div class="a" style="left:631px;top:787px;width:48px;height:19px;background:#f0f0f0;"></div>
<div class="cb" style="left:649px;top:790px"></div>
<div class="a" style="left:679px;top:787px;width:57px;height:19px;background:#d8d8d8;"></div>
<div class="tx" style="left:738px;top:787px;width:253px;height:20px;line-height:20px;font-size:12.6px;font-weight:bold;overflow:hidden;"><span style="position:absolute;left:0;top:0;transform-origin:0 0;transform:scaleX(0.937)">Team A</span></div>
<div class="tx" style="left:717px;top:787px;width:400px;height:20px;line-height:20px;font-size:12.6px;font-weight:bold;"><span style="position:absolute;right:0;top:0;transform-origin:100% 0;transform:scaleX(0.99)">7/16/2021 04:19 PM</span></div>
<svg width="16" height="11" viewBox="0 0 16 11" style="position:absolute;left:1122px;top:791px"><path d="M0 5.5C2.5 1.5 5 0 8 0S13.5 1.5 16 5.5C13.5 9.5 11 11 8 11S2.5 9.5 0 5.5z" fill="#2b7bc2"/><circle cx="8" cy="5.5" r="3.6" fill="none" stroke="#fff" stroke-width="0.9"/><circle cx="6.9" cy="4.3" r="0.8" fill="#fff"/></svg>
<div class="tx" style="left:1140px;top:787px;width:234px;height:20px;line-height:20px;font-size:12.6px;font-weight:bold;overflow:hidden;"><span style="position:absolute;left:0;top:0;transform-origin:0 0;transform:scaleX(0.937)">Welcome to the Team A group.Use the group to</span></div>
<div class="a" style="left:1376px;top:787px;width:154px;height:19px;background:#d8d8d8;"></div>
<div class="a" style="left:64px;top:786px;width:1466px;height:1px;background:#707070"></div>
<div class="a" style="left:178px;top:184px;width:1px;height:617px;background:#3b4a5e"></div>
<div class="a" style="left:1530px;top:184px;width:1px;height:617px;background:#c8c8c8"></div>
<!-- scrollbar -->
<div class="a" style="left:45px;top:801px;width:1486px;height:13px;background:#f0f0f0"></div>
<div class="a" style="left:62px;top:802px;width:1428px;height:12px;background:#fff;border:1px solid #d8d8d8;border-bottom:none"></div>
<div class="a" style="left:772px;top:805px;width:8px;height:8px;background:repeating-linear-gradient(90deg,#777 0 1px,transparent 1px 2px)"></div>
<div class="a" style="left:1490px;top:802px;width:41px;height:12px;background:#f3f3f3"></div>
<!-- tooltip -->
<div class="a" style="left:1144px;top:347px;width:348px;height:116px;background:#fff;border:1px solid #c8c8c8;border-radius:8px"></div>
<div class="tx" style="left:1155px;top:360px;height:13px;line-height:13px;font-size:12px;width:340px"><span style="position:absolute;left:0;transform-origin:0 0;transform:scaleX(1.08)">Welcome to the Q1 team Allan group.</span></div><div class="tx" style="left:1155px;top:373px;height:13px;line-height:13px;font-size:12px;width:340px"><span style="position:absolute;left:0;transform-origin:0 0;transform:scaleX(1.08)">Use the group to share ideas, files, and important dates.</span></div><div class="tx" style="left:1155px;top:386px;height:13px;line-height:13px;font-size:12px;width:340px"><span style="position:absolute;left:0;transform-origin:0 0;transform:scaleX(1.08)">Start a conversation</span></div><div class="tx" style="left:1155px;top:399px;height:13px;line-height:13px;font-size:12px;width:340px"><span style="position:absolute;left:0;transform-origin:0 0;transform:scaleX(1.08)">Read group conversations or start your own.</span></div><div class="tx" style="left:1155px;top:412px;height:13px;line-height:13px;font-size:12px;width:340px"><span style="position:absolute;left:0;transform-origin:0 0;transform:scaleX(1.08)">Add to the team site</span></div><div class="tx" style="left:1155px;top:425px;height:13px;line-height:13px;font-size:12px;width:340px"><span style="position:absolute;left:0;transform-origin:0 0;transform:scaleX(1.08)">Start sharing and collaborating on content in SharePoint.</span></div><div class="tx" style="left:1155px;top:438px;height:13px;line-height:13px;font-size:12px;width:340px"><span style="position:absolute;left:0;transform-origin:0 0;transform:scaleX(1.08)">Share files</span></div>
<svg class="a" style="left:4px;top:2px" width="24" height="24" viewBox="0 0 24 24"><circle cx="12.1" cy="10.9" r="7.4" fill="none" stroke="#9448ac" stroke-width="1.3"/><ellipse cx="9.6" cy="7.4" rx="1.4" ry="0.9" fill="#9448ac"/><ellipse cx="14.6" cy="7.4" rx="1.4" ry="0.9" fill="#9448ac"/><path d="M6.4 10h3.9l-0.6 5.3-1.6 0.9z M13.9 10h3.9l-1.7 6.2-1.6-0.9z M10.6 16.6l1.5-2.6 1.5 2.6z" fill="#9448ac"/></svg><svg class="a" style="left:35px;top:5px" width="15" height="18" viewBox="0 0 15 18"><rect x="1.5" y="1.5" width="6.5" height="11.5" fill="#c9dcf0" stroke="#6fa6dc" stroke-width="1"/><rect x="6.5" y="5.5" width="6" height="11" fill="#7aa8d8" stroke="#2f78c4" stroke-width="1.2"/></svg><svg class="a" style="left:56px;top:10px" width="10" height="8" viewBox="0 0 10 8"><rect x="1" y="1" width="7" height="1" fill="#333"/><path d="M1.5 3.5h6l-3 3z" fill="#333"/></svg><svg class="a" style="left:21px;top:68px" width="18" height="18" viewBox="0 0 18 18"><path d="M17 9H3M9 2.5L2.5 9 9 15.5" fill="none" stroke="#8e8e8e" stroke-width="3"/></svg><svg class="a" style="left:69px;top:68px" width="18" height="18" viewBox="0 0 18 18"><path d="M1 9h14M9 2.5L15.5 9 9 15.5" fill="none" stroke="#8e8e8e" stroke-width="3"/></svg><svg class="a" style="left:121px;top:62px" width="32" height="32" viewBox="0 0 32 32"><rect x="1.5" y="1" width="27" height="6" fill="#3a78c0"/><path d="M1.5 7v20.5h27V7M8.5 7v20.5M14.5 7v20.5M20.5 7v20.5" fill="none" stroke="#5a5a5a" stroke-width="1"/><circle cx="23.5" cy="23.3" r="7" fill="#fff" stroke="#5a5a5a" stroke-width="1.3"/><path d="M26.5 19.8l-2.2 4.3-2 -1.5z" fill="#2e6fc0"/><path d="M20.5 26.8l2-4.3 2 1.5z" fill="#e04030"/></svg><svg class="a" style="left:176px;top:58px" width="36" height="36" viewBox="0 0 36 36"><path d="M30 18.2A13 13 0 1 1 28.26 11.7" fill="none" stroke="#3e9b72" stroke-width="3.5"/><path d="M29 3L32.7 6.1V16.7H23.5L20.2 13.3H29z" fill="#3e9b72"/></svg><svg class="a" style="left:222px;top:58px" width="36" height="36" viewBox="0 0 36 36"><path d="M16 29.55A10.9 10.9 0 1 1 25.4 13.2" fill="none" stroke="#3e9b72" stroke-width="4"/><path d="M26.3 6.8L29 8.8V15.7H22.5L20.1 12.8H26.3z" fill="#3e9b72"/><path d="M24.30 30.48C24.30 27.88 25.80 27.20 27.70 27.20S31.10 27.88 31.10 30.48Q31.10 31.70 29.88 31.70H25.52Q24.30 31.70 24.30 30.48z" fill="#fff" stroke="#fff" stroke-width="1.6"/><circle cx="27.7" cy="23.7" r="3.3" fill="#fff"/><path d="M24.30 30.48C24.30 27.88 25.80 27.20 27.70 27.20S31.10 27.88 31.10 30.48Q31.10 31.70 29.88 31.70H25.52Q24.30 31.70 24.30 30.48z" fill="#2d6fc0"/><circle cx="27.7" cy="23.7" r="2.5" fill="#2d6fc0"/><path d="M16.60 32.66C16.60 30.02 18.36 29.30 20.60 29.30S24.60 30.02 24.60 32.66Q24.60 34.10 23.16 34.10H18.04Q16.60 34.10 16.60 32.66z" fill="#fff" stroke="#fff" stroke-width="1.6"/><circle cx="20.6" cy="25.7" r="3.4000000000000004" fill="#fff"/><path d="M16.60 32.66C16.60 30.02 18.36 29.30 20.60 29.30S24.60 30.02 24.60 32.66Q24.60 34.10 23.16 34.10H18.04Q16.60 34.10 16.60 32.66z" fill="#2d6fc0"/><circle cx="20.6" cy="25.7" r="2.6" fill="#2d6fc0"/></svg><svg class="a" style="left:281px;top:62px" width="30" height="30" viewBox="0 0 30 30"><circle cx="14.9" cy="15" r="13.8" fill="#b5b5b5"/><path d="M6 15.5l6.5 6.5 12-12.5" fill="none" stroke="#fff" stroke-width="4"/></svg><svg class="a" style="left:327px;top:62px" width="32" height="32" viewBox="0 0 32 32"><circle cx="14.8" cy="15" r="13.8" fill="#b5b5b5"/><path d="M6 15.5l6.5 6.5 12-12.5" fill="none" stroke="#fff" stroke-width="4"/><path d="M21.50 26.56C21.50 24.18 23.26 23.50 25.50 23.50S29.50 24.18 29.50 26.56Q29.50 28.00 28.06 28.00H22.94Q21.50 28.00 21.50 26.56z" fill="#fff" stroke="#fff" stroke-width="1.6"/><circle cx="25.5" cy="20" r="3.3" fill="#fff"/><path d="M21.50 26.56C21.50 24.18 23.26 23.50 25.50 23.50S29.50 24.18 29.50 26.56Q29.50 28.00 28.06 28.00H22.94Q21.50 28.00 21.50 26.56z" fill="#999"/><circle cx="25.5" cy="20" r="2.5" fill="#999"/><path d="M14.30 29.38C14.30 26.75 16.28 26.00 18.80 26.00S23.30 26.75 23.30 29.38Q23.30 31.00 21.68 31.00H15.92Q14.30 31.00 14.30 29.38z" fill="#fff" stroke="#fff" stroke-width="1.6"/><circle cx="18.8" cy="22.3" r="3.5" fill="#fff"/><path d="M14.30 29.38C14.30 26.75 16.28 26.00 18.80 26.00S23.30 26.75 23.30 29.38Q23.30 31.00 21.68 31.00H15.92Q14.30 31.00 14.30 29.38z" fill="#999"/><circle cx="18.8" cy="22.3" r="2.7" fill="#999"/></svg><svg class="a" style="left:380px;top:60px" width="36" height="36" viewBox="0 0 36 36"><path d="M4.2 25.7V13.3L8.4 9.1L9.3 16.5C13 12 19 7.1 24.8 7.1C30 7.1 33.6 11 33.6 16.8C33.6 20 32.8 23 31.9 25.7H26.5C27.5 23 28.8 20 28.8 16.8C28.8 13.5 27 11.9 24.8 11.9C20 11.9 15.5 16 12.8 21.2H21.7L16.8 25.7Z" fill="#aaaaaa"/></svg><svg class="a" style="left:426px;top:60px" width="40" height="36" viewBox="0 0 40 36"><path d="M4.2 25.7V13.3L8.4 9.1L9.3 16.5C13 12 19 7.1 24.8 7.1C30 7.1 33.6 11 33.6 16.8C33.6 17.5 33.5 18.8 33.4 19.5H28.6C28.7 18.8 28.8 17.5 28.8 16.8C28.8 13.5 27 11.9 24.8 11.9C20 11.9 15.5 16 12.8 21.2H21.7L16.8 25.7Z" fill="#aaaaaa"/><rect x="24" y="22" width="10.2" height="10.4" fill="#fff" stroke="#999" stroke-width="1.2"/><path d="M25.6 26.3l2 4 4.8-7" fill="none" stroke="#a8a8a8" stroke-width="1.8"/></svg><svg class="a" style="left:488px;top:60px" width="30" height="34" viewBox="0 0 30 34"><rect x="1" y="4" width="27" height="4" fill="#3a78c0"/><rect x="11" y="1" width="6" height="4" rx="1.5" fill="#3a78c0"/><rect x="3" y="9" width="23" height="24" fill="#666"/><rect x="7.5" y="12" width="3" height="17.5" fill="#fff"/><rect x="13" y="12" width="3" height="17.5" fill="#fff"/><rect x="18.5" y="12" width="3" height="17.5" fill="#fff"/></svg><svg class="a" style="left:540px;top:61px" width="34" height="33" viewBox="0 0 34 33"><path d="M2 1h29.5a1 1 0 0 1 1 1v20h-23l-3 6.5v-6.5h-4.5a1 1 0 0 1-1-1V2a1 1 0 0 1 1-1z" fill="#3a78c0"/><circle cx="9" cy="12" r="2.2" fill="#fff"/><circle cx="16.5" cy="12" r="2.2" fill="#fff"/><circle cx="24" cy="12" r="2.2" fill="#fff"/><rect x="18.5" y="19.5" width="13.5" height="12" fill="#fff" stroke="#3a78c0" stroke-width="1.5"/><path d="M21 23h8.5M21 25.5h8.5M21 28h5" stroke="#3a78c0" stroke-width="1"/></svg><svg class="a" style="left:624px;top:61px" width="36" height="32" viewBox="0 0 36 32"><path d="M15.20 21.30C15.20 15.43 18.72 14.00 23.20 14.00S31.20 15.43 31.20 21.30Q31.20 23.50 29.00 23.50H17.40Q15.20 23.50 15.20 21.30z" fill="#fff" stroke="#fff" stroke-width="1.6"/><circle cx="23.2" cy="7.5" r="6.3" fill="#fff"/><path d="M15.20 21.30C15.20 15.43 18.72 14.00 23.20 14.00S31.20 15.43 31.20 21.30Q31.20 23.50 29.00 23.50H17.40Q15.20 23.50 15.20 21.30z" fill="#3a6fb8"/><circle cx="23.2" cy="7.5" r="5.5" fill="#3a6fb8"/><path d="M2.90 24.70C2.90 18.40 6.64 16.90 11.40 16.90S19.90 18.40 19.90 24.70Q19.90 26.90 17.70 26.90H5.10Q2.90 26.90 2.90 24.70z" fill="#fff" stroke="#fff" stroke-width="1.6"/><circle cx="11.4" cy="10.6" r="6.1" fill="#fff"/><path d="M2.90 24.70C2.90 18.40 6.64 16.90 11.40 16.90S19.90 18.40 19.90 24.70Q19.90 26.90 17.70 26.90H5.10Q2.90 26.90 2.90 24.70z" fill="#3a6fb8"/><circle cx="11.4" cy="10.6" r="5.3" fill="#3a6fb8"/><circle cx="26" cy="23.7" r="7" fill="#8e3fa8" stroke="#fff" stroke-width="1"/><rect x="24.8" y="21.5" width="2.6" height="6.8" fill="#fff"/><circle cx="26.1" cy="19.2" r="1.5" fill="#fff"/></svg><svg class="a" style="left:686px;top:61px" width="36" height="32" viewBox="0 0 36 32"><path d="M16.00 22.10C16.00 15.80 19.52 14.30 24.00 14.30S32.00 15.80 32.00 22.10Q32.00 24.30 29.80 24.30H18.20Q16.00 24.30 16.00 22.10z" fill="#fff" stroke="#fff" stroke-width="1.6"/><circle cx="24" cy="7.8" r="6.3" fill="#fff"/><path d="M16.00 22.10C16.00 15.80 19.52 14.30 24.00 14.30S32.00 15.80 32.00 22.10Q32.00 24.30 29.80 24.30H18.20Q16.00 24.30 16.00 22.10z" fill="#3a6fb8"/><circle cx="24" cy="7.8" r="5.5" fill="#3a6fb8"/><path d="M3.00 26.10C3.00 19.38 6.96 17.80 12.00 17.80S21.00 19.38 21.00 26.10Q21.00 28.30 18.80 28.30H5.20Q3.00 28.30 3.00 26.10z" fill="#fff" stroke="#fff" stroke-width="1.6"/><circle cx="12" cy="11.3" r="6.3" fill="#fff"/><path d="M3.00 26.10C3.00 19.38 6.96 17.80 12.00 17.80S21.00 19.38 21.00 26.10Q21.00 28.30 18.80 28.30H5.20Q3.00 28.30 3.00 26.10z" fill="#3a6fb8"/><circle cx="12" cy="11.3" r="5.5" fill="#3a6fb8"/></svg><svg class="a" style="left:744px;top:59px" width="38" height="36" viewBox="0 0 38 36"><path d="M15.80 21.20C15.80 15.33 19.10 13.90 23.30 13.90S30.80 15.33 30.80 21.20Q30.80 23.40 28.60 23.40H18.00Q15.80 23.40 15.80 21.20z" fill="#fff" stroke="#fff" stroke-width="1.6"/><circle cx="23.3" cy="7.7" r="6.0" fill="#fff"/><path d="M15.80 21.20C15.80 15.33 19.10 13.90 23.30 13.90S30.80 15.33 30.80 21.20Q30.80 23.40 28.60 23.40H18.00Q15.80 23.40 15.80 21.20z" fill="#3a6fb8"/><circle cx="23.3" cy="7.7" r="5.2" fill="#3a6fb8"/><path d="M3.30 25.50C3.30 19.20 7.04 17.70 11.80 17.70S20.30 19.20 20.30 25.50Q20.30 27.70 18.10 27.70H5.50Q3.30 27.70 3.30 25.50z" fill="#fff" stroke="#fff" stroke-width="1.6"/><circle cx="11.8" cy="11.4" r="6.1" fill="#fff"/><path d="M3.30 25.50C3.30 19.20 7.04 17.70 11.80 17.70S20.30 19.20 20.30 25.50Q20.30 27.70 18.10 27.70H5.50Q3.30 27.70 3.30 25.50z" fill="#3a6fb8"/><circle cx="11.8" cy="11.4" r="5.3" fill="#3a6fb8"/><path d="M26 16.5h8a1.5 1.5 0 0 1 1.5 1.5v5.5a1.5 1.5 0 0 1-1.5 1.5h-2v6.5l-1.6 2-1.6-2v-1.3h1.4v-1.4h-1.4v-1.3h1.4v-0.5h-0.8v-1.5h-3.4a1.5 1.5 0 0 1-1.5-1.5V18a1.5 1.5 0 0 1 1.5-1.5z" fill="#e5a030" stroke="#fff" stroke-width="0.9"/><rect x="28.3" y="18.6" width="3.6" height="1.8" fill="#fff"/></svg><svg class="a" style="left:28px;top:121px" width="6" height="4" viewBox="0 0 6 4"><path d="M0 0h5l-2.5 3z" fill="#888"/></svg><svg class="a" style="left:73px;top:121px" width="6" height="4" viewBox="0 0 6 4"><path d="M0 0h5l-2.5 3z" fill="#888"/></svg><svg class="a" style="left:150px;top:116px" width="6" height="4" viewBox="0 0 6 4"><path d="M0 0h5l-2.5 3z" fill="#888"/></svg><svg class="a" style="left:552px;top:121px" width="6" height="4" viewBox="0 0 6 4"><path d="M0 0h5l-2.5 3z" fill="#888"/></svg><svg class="a" style="left:662px;top:116px" width="6" height="4" viewBox="0 0 6 4"><path d="M0 0h5l-2.5 3z" fill="#888"/></svg><svg class="a" style="left:700px;top:121px" width="6" height="4" viewBox="0 0 6 4"><path d="M0 0h5l-2.5 3z" fill="#888"/></svg><svg class="a" style="left:759px;top:121px" width="6" height="4" viewBox="0 0 6 4"><path d="M0 0h5l-2.5 3z" fill="#888"/></svg><svg class="a" style="left:14px;top:157px" width="20" height="20" viewBox="0 0 20 20"><rect x="1" y="1" width="15" height="3.6" fill="#2e75b6"/><rect x="5.2" y="7.5" width="11.8" height="2.8" fill="#2e75b6"/><rect x="5.2" y="11.3" width="11.8" height="2.8" fill="#2e75b6"/><rect x="5.2" y="15.3" width="11.8" height="2.8" fill="#2e75b6"/><path d="M2.5 4.5v4.5" stroke="#555" stroke-width="1"/><circle cx="2.5" cy="9" r="1.5" fill="none" stroke="#555" stroke-width="0.9"/><circle cx="2.5" cy="12.7" r="1.5" fill="none" stroke="#555" stroke-width="0.9"/><circle cx="2.5" cy="16.7" r="1.5" fill="none" stroke="#555" stroke-width="0.9"/></svg><svg class="a" style="left:47px;top:157px" width="20" height="20" viewBox="0 0 20 20"><rect x="1" y="1" width="4" height="4" fill="#4a4a4a"/><rect x="7" y="1" width="12" height="4" fill="#808080"/><rect x="1" y="8" width="4" height="4" fill="#4a4a4a"/><rect x="7" y="8" width="12" height="4" fill="#808080"/><rect x="1" y="15" width="4" height="4" fill="#4a4a4a"/><rect x="7" y="15" width="12" height="4" fill="#808080"/></svg><svg class="a" style="left:1332px;top:157px" width="18" height="20" viewBox="0 0 18 20"><rect x="1" y="2.5" width="16" height="2.2" fill="#3a78c0"/><rect x="6.5" y="1" width="5" height="2" fill="#3a78c0"/><rect x="2.5" y="5.5" width="13" height="13.5" fill="#666"/><rect x="5" y="7.5" width="1.8" height="9.5" fill="#fff"/><rect x="8.1" y="7.5" width="1.8" height="9.5" fill="#fff"/><rect x="11.2" y="7.5" width="1.8" height="9.5" fill="#fff"/></svg><svg class="a" style="left:1360px;top:161px" width="13" height="13" viewBox="0 0 13 13"><circle cx="6" cy="6.5" r="5" fill="none" stroke="#777" stroke-width="1"/><path d="M6 4v5" stroke="#777" stroke-width="1"/></svg><svg class="a" style="left:50px;top:189px" width="10" height="13" viewBox="0 0 10 13"><path d="M2.5 5V3.5a2.5 2.5 0 0 1 5 0V5" fill="none" stroke="#e8b060" stroke-width="1.8"/><rect x="0.5" y="5" width="9" height="6.5" fill="#e8b060"/><rect x="4.3" y="7" width="1.4" height="2.5" fill="#fff"/></svg><svg class="a" style="left:124px;top:189px" width="10" height="13" viewBox="0 0 10 13"><path d="M2.5 5V3.5a2.5 2.5 0 0 1 5 0V5" fill="none" stroke="#e8b060" stroke-width="1.8"/><rect x="0.5" y="5" width="9" height="6.5" fill="#e8b060"/><rect x="4.3" y="7" width="1.4" height="2.5" fill="#fff"/></svg><svg class="a" style="left:144px;top:189px" width="10" height="13" viewBox="0 0 10 13"><path d="M2.5 5V3.5a2.5 2.5 0 0 1 5 0V5" fill="none" stroke="#e8b060" stroke-width="1.8"/><rect x="0.5" y="5" width="9" height="6.5" fill="#e8b060"/><rect x="4.3" y="7" width="1.4" height="2.5" fill="#fff"/></svg><svg class="a" style="left:164px;top:189px" width="10" height="13" viewBox="0 0 10 13"><path d="M2.5 5V3.5a2.5 2.5 0 0 1 5 0V5" fill="none" stroke="#e8b060" stroke-width="1.8"/><rect x="0.5" y="5" width="9" height="6.5" fill="#e8b060"/><rect x="4.3" y="7" width="1.4" height="2.5" fill="#fff"/></svg><svg class="a" style="left:2px;top:184px" width="43" height="47" viewBox="0 0 43 47"><path d="M15.4 36.2A13 13 0 0 1 16.2 10.5" fill="none" stroke="#fff" stroke-width="1.4"/><path d="M20.2 10.6A13 13 0 0 1 19.4 36.3" fill="none" stroke="#fff" stroke-width="1.4"/><path d="M14.8 8.2l3.4 2.3-3.2 2.6" fill="none" stroke="#fff" stroke-width="1.5"/><path d="M20.4 33.8l-3 2.5 3 2.6" fill="none" stroke="#fff" stroke-width="1.5"/><g transform="translate(17.7 23.3)" fill="#fff"><circle r="6"/><rect x="-1.6" y="-8" width="3.2" height="4" rx="1" transform="rotate(0)"/><rect x="-1.6" y="-8" width="3.2" height="4" rx="1" transform="rotate(36)"/><rect x="-1.6" y="-8" width="3.2" height="4" rx="1" transform="rotate(72)"/><rect x="-1.6" y="-8" width="3.2" height="4" rx="1" transform="rotate(108)"/><rect x="-1.6" y="-8" width="3.2" height="4" rx="1" transform="rotate(144)"/><rect x="-1.6" y="-8" width="3.2" height="4" rx="1" transform="rotate(180)"/><rect x="-1.6" y="-8" width="3.2" height="4" rx="1" transform="rotate(216)"/><rect x="-1.6" y="-8" width="3.2" height="4" rx="1" transform="rotate(252)"/><rect x="-1.6" y="-8" width="3.2" height="4" rx="1" transform="rotate(288)"/><rect x="-1.6" y="-8" width="3.2" height="4" rx="1" transform="rotate(324)"/></g><circle cx="17.7" cy="23.3" r="2.6" fill="#fff" stroke="#5530a8" stroke-width="0.9"/><path d="M35.6 17.6l5 4.9-5 5" fill="none" stroke="#ddd3f0" stroke-width="1.3"/></svg><svg class="a" style="left:1150px;top:455px" width="30" height="26" viewBox="0 0 30 26"><path d="M9.5 7v16.5L20.5 7z" fill="#fff"/><path d="M9.5 7.5v16L20.5 7" fill="none" stroke="#c8c8c8" stroke-width="1"/></svg><svg class="a" style="left:1159px;top:478px" width="14" height="22" viewBox="0 0 14 22"><path d="M1 1v16l4-3.5 2.8 6.2 2.4-1-2.8-6h5.3z" fill="#fff" stroke="#000" stroke-width="1"/></svg><div class="a" style="left:1521px;top:17px;width:10px;height:2px;background:#555"></div>
</body></html>
